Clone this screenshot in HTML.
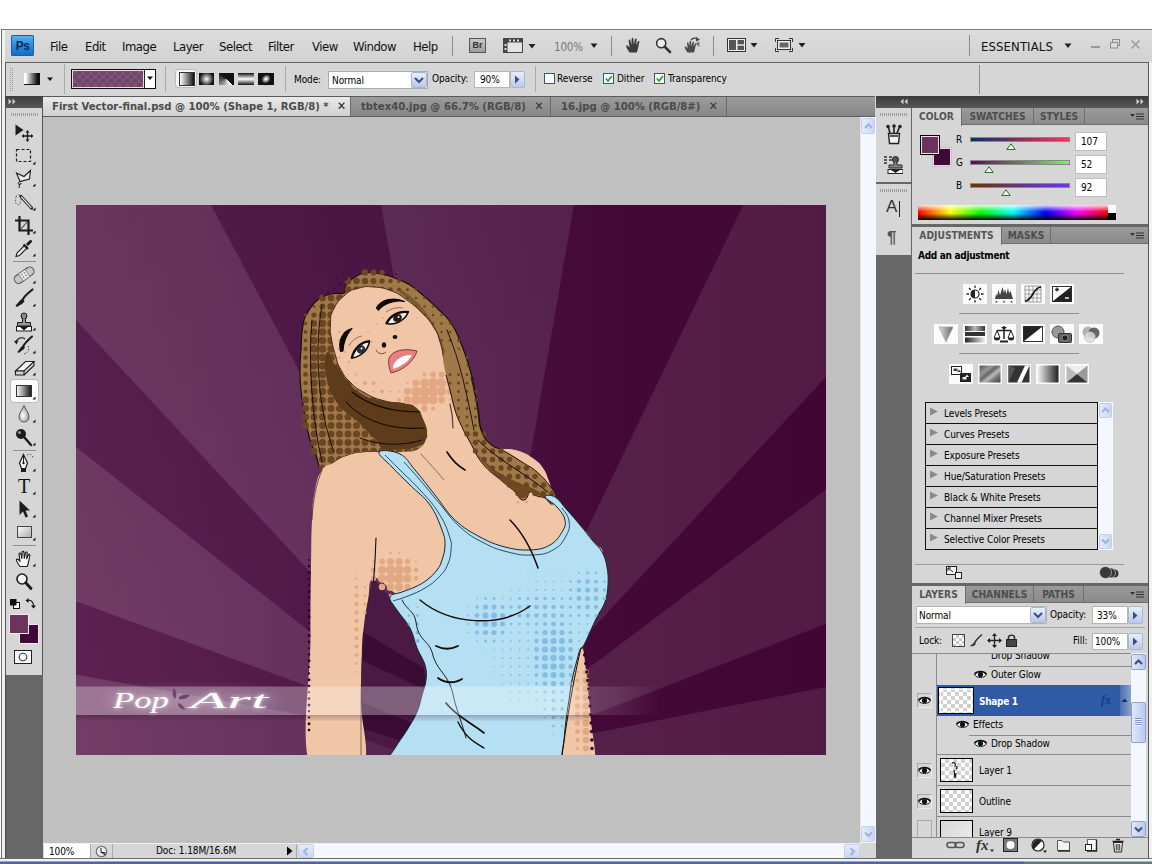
<!DOCTYPE html>
<html lang="en">
<head>
<meta charset="utf-8">
<title>Adobe Photoshop CS4 - First Vector-final.psd</title>
<style>
html,body{margin:0;padding:0;}
body{width:1152px;height:864px;overflow:hidden;background:#fff;position:relative;
 font-family:"DejaVu Sans Condensed","Liberation Sans",sans-serif;font-size:11px;color:#000;}
.abs{position:absolute;}
#win{position:absolute;left:0;top:29px;width:1152px;height:835px;background:#d6d6d6;}
/* window edges */
#edgeL{left:0;top:29px;width:5px;height:832px;background:linear-gradient(90deg,#fff 0 1px,#6e6e6e 1px 2px,#f0f0f0 2px 5px);}
#edgeR{left:1148px;top:62px;width:4px;height:799px;background:linear-gradient(90deg,#555 0 1px,#f1f1f1 1px 4px);}
#edgeT{left:1px;top:29px;width:1151px;height:1px;background:#7d7d7d;}
#edgeB{left:0;top:858px;width:1152px;height:6px;background:linear-gradient(180deg,#6d6d6d 0 1px,#f2f2f2 1px 3px,#9aa3b5 3px 4px,#4a66a8 4px 6px);}
/* menubar */
#menubar{left:2px;top:30px;width:1150px;height:32px;background:linear-gradient(180deg,#dcdcdc,#d2d2d2);}
.menu{position:absolute;top:39px;font-size:13px;line-height:16px;color:#111;letter-spacing:-0.5px;white-space:nowrap;}
.vsep{position:absolute;width:1px;background:#8c8c8c;}
/* options bar */
#optbar{left:5px;top:62px;width:1144px;height:34px;background:#d6d6d6;border-top:1px solid #5f5f5f;border-right:1px solid #5f5f5f;border-left:1px solid #5f5f5f;box-sizing:border-box;}
.lbl{position:absolute;font-size:10px;line-height:13px;white-space:nowrap;color:#000;letter-spacing:-0.1px;}
.field{position:absolute;background:#fff;border:1px solid #9a9a9a;box-sizing:border-box;}
.xpbtn{position:absolute;box-sizing:border-box;border:1px solid #a9b6cf;border-radius:2px;background:linear-gradient(180deg,#e8eefb,#b9c8ea);}
.chk{position:absolute;width:11px;height:11px;background:#fff;border:1px solid #2b5a8c;box-sizing:border-box;}
/* doc tabs */
#tabbar{left:43px;top:96px;width:832px;height:21px;background:linear-gradient(180deg,#9c9c9c,#868686);border-top:1px solid #5a5a5a;border-bottom:1px solid #5f5f5f;box-sizing:border-box;}
.dtab{position:absolute;top:97px;height:19px;box-sizing:border-box;font-weight:bold;font-size:11.2px;line-height:18px;color:#4a4a4a;white-space:nowrap;border-right:1px solid #6a6a6a;}
.dtab.act{background:linear-gradient(180deg,#e9e9e9,#d0d0d0);color:#4c4c4c;}
/* canvas */
#canvasbg{left:43px;top:117px;width:817px;height:726px;background:#c0c0c0;}
#vscroll{left:860px;top:117px;width:16px;height:726px;background:#f4f7fd;border-left:1px solid #e6e6e6;box-sizing:border-box;}
#status{left:43px;top:843px;width:833px;height:15px;background:#d6d6d6;border-top:1px solid #efefef;box-sizing:border-box;}
/* tool dock */
#tooldock{left:5px;top:96px;width:38px;height:762px;background:#676767;border-left:1px solid #4a4a4a;box-sizing:border-box;}
#toolhead{left:5px;top:96px;width:38px;height:12px;background:linear-gradient(180deg,#3f3f3f,#585858);}
#toolbar{left:5px;top:108px;width:38px;height:567px;background:#d6d6d6;border-left:1px solid #555;border-right:1px solid #555;box-sizing:border-box;}
/* right dock */
#rdock{left:876px;top:96px;width:272px;height:762px;background:#676767;}
#rhead{left:876px;top:96px;width:272px;height:12px;background:linear-gradient(180deg,#3a3a3a,#585858);}
.panel{position:absolute;background:#d6d6d6;}
.ptabs{position:absolute;height:17px;background:linear-gradient(180deg,#9a9a9a,#8a8a8a);border-bottom:1px solid #6e6e6e;box-sizing:border-box;}
.ptab{position:absolute;top:0;height:17px;box-sizing:border-box;font-weight:bold;font-size:10.2px;line-height:17px;color:#4d4d4d;text-align:center;border-right:1px solid #6e6e6e;letter-spacing:0;}
.ptab.act{background:#d6d6d6;color:#555;height:18px;}
.row{position:absolute;left:0;white-space:nowrap;}
</style>
</head>
<body>
<div id="win"></div>
<div id="menubar" class="abs"></div>
<!-- Ps logo -->
<div class="abs" style="left:11px;top:35px;width:23px;height:21px;border-radius:2px;background:linear-gradient(180deg,#5db4ee 0%,#2f8fdf 45%,#1169c4 100%);box-shadow:0 0 0 1px #1a5fa8 inset;"></div>
<div class="abs" style="left:11px;top:38px;width:23px;height:17px;text-align:center;font:bold 12px/17px 'Liberation Sans',sans-serif;color:#0a2a5e;letter-spacing:-0.5px;">Ps</div>
<div class="menu" style="left:50px">File</div>
<div class="menu" style="left:85px">Edit</div>
<div class="menu" style="left:122px">Image</div>
<div class="menu" style="left:173px">Layer</div>
<div class="menu" style="left:219px">Select</div>
<div class="menu" style="left:268px">Filter</div>
<div class="menu" style="left:312px">View</div>
<div class="menu" style="left:353px">Window</div>
<div class="menu" style="left:413px">Help</div>
<div class="vsep" style="left:452px;top:36px;height:20px"></div>
<!-- Br -->
<div class="abs" style="left:469px;top:38px;width:17px;height:15px;box-sizing:border-box;border:1px solid #555;background:linear-gradient(180deg,#c9c9c9,#9d9d9d);font:bold 9px/13px 'Liberation Sans',sans-serif;color:#333;text-align:center;">Br</div>
<!-- film icon -->
<svg class="abs" style="left:503px;top:37px" width="36" height="17" viewBox="0 0 36 17">
 <rect x="0.5" y="1.5" width="19" height="14" fill="#e4e4e4" stroke="#444"/>
 <rect x="0.5" y="1.5" width="19" height="4" fill="#444"/>
 <rect x="0.5" y="1.5" width="4" height="14" fill="#444"/>
 <g fill="#ddd"><rect x="6" y="2.5" width="2" height="2"/><rect x="10" y="2.5" width="2" height="2"/><rect x="14" y="2.5" width="2" height="2"/><rect x="1.5" y="7" width="2" height="2"/><rect x="1.5" y="11" width="2" height="2"/></g>
 <path d="M25.5 7 h7 l-3.5 4.5z" fill="#222"/>
</svg>
<div class="menu" style="left:554px;color:#777;font-size:11.5px;top:39px;letter-spacing:-0.2px">100%</div>
<svg class="abs" style="left:590px;top:43px" width="9" height="6"><path d="M0.5 0.5 h7 l-3.5 4.5z" fill="#222"/></svg>
<div class="vsep" style="left:611px;top:36px;height:20px"></div>
<!-- hand -->
<svg class="abs" style="left:625px;top:37px" width="18" height="17" viewBox="0 0 18 17">
 <path d="M4.5 15.5 C2 12 0.8 9.5 1.2 8.6 C2 7.6 3.4 9 4.6 10.6 L3.6 3.4 C3.5 2.2 5 2.1 5.3 3.2 L6.4 8 L6.6 1.8 C6.7 0.5 8.3 0.5 8.4 1.8 L8.8 7.8 L10 2.3 C10.3 1.1 11.8 1.4 11.7 2.6 L11.1 8.3 L12.9 4.4 C13.5 3.4 14.8 4 14.4 5.1 C13.4 8.5 13.3 12 11.8 15.5 Z" fill="#3c3c3c"/>
</svg>
<!-- zoom -->
<svg class="abs" style="left:655px;top:37px" width="17" height="17" viewBox="0 0 17 17">
 <circle cx="6.2" cy="6.2" r="4.6" fill="#eee" stroke="#333" stroke-width="1.6"/>
 <path d="M9.6 9.6 L15 15" stroke="#333" stroke-width="2.6" stroke-linecap="round"/>
</svg>
<!-- rotate view -->
<svg class="abs" style="left:683px;top:36px" width="19" height="18" viewBox="0 0 19 18">
 <path d="M4.5 16.5 C2.5 13.5 1.3 11.5 1.7 10.8 C2.4 10 3.6 11.2 4.6 12.4 L4 7 C3.9 6 5.2 5.9 5.4 6.8 L6.3 10.4 L6.6 5.6 C6.7 4.6 8 4.6 8.1 5.6 L8.4 10.2 L9.5 6.2 C9.8 5.2 11 5.5 10.9 6.4 L10.4 10.7 L11.8 7.8 C12.3 7 13.3 7.5 13 8.3 C12.2 11 12.1 13.8 10.9 16.5 Z" fill="#4a4a4a"/>
 <path d="M8 4 C10 1.6 13.2 1.6 15 3.4" fill="none" stroke="#444" stroke-width="1.3"/>
 <path d="M13.2 1 L17 3.8 L13 5.6z" fill="#444"/>
 <path d="M12.5 7.5 L16.5 5.5 L16.2 11z" fill="#777"/>
</svg>
<div class="vsep" style="left:713px;top:36px;height:20px"></div>
<!-- arrange -->
<svg class="abs" style="left:727px;top:38px" width="32" height="15" viewBox="0 0 32 15">
 <rect x="0.5" y="0.5" width="18" height="13" fill="#f0f0f0" stroke="#333"/>
 <rect x="2" y="2" width="7" height="10" fill="#555"/>
 <rect x="10.5" y="2" width="6.5" height="4.3" fill="#555"/>
 <rect x="10.5" y="7.7" width="6.5" height="4.3" fill="#555"/>
 <path d="M23.5 5 h7 l-3.5 4.5z" fill="#222"/>
</svg>
<!-- screen mode -->
<svg class="abs" style="left:775px;top:38px" width="32" height="15" viewBox="0 0 32 15">
 <path d="M0.5 4 V0.5 H4 M14 0.5 H17.5 V4 M17.5 10 V13.5 H14 M4 13.5 H0.5 V10" fill="none" stroke="#333"/>
 <rect x="2.5" y="2.5" width="13" height="9" fill="#eee" stroke="#333"/>
 <rect x="4.5" y="4.5" width="9" height="5" fill="#666"/>
 <path d="M23.5 5 h7 l-3.5 4.5z" fill="#222"/>
</svg>
<div class="vsep" style="left:969px;top:35px;height:21px"></div>
<div class="menu" style="left:981px;top:39px;font-size:13px;letter-spacing:0.1px">ESSENTIALS</div>
<svg class="abs" style="left:1064px;top:43px" width="9" height="6"><path d="M0.5 0.5 h7 l-3.5 4.5z" fill="#222"/></svg>
<!-- window buttons -->
<div class="abs" style="left:1091px;top:46px;width:9px;height:2px;background:#9a9a9a"></div>
<svg class="abs" style="left:1110px;top:39px" width="11" height="10"><rect x="2.5" y="0.5" width="7" height="6" fill="none" stroke="#8a8a8a"/><rect x="0.5" y="3.5" width="7" height="5.5" fill="#dcdcdc" stroke="#8a8a8a"/></svg>
<svg class="abs" style="left:1131px;top:40px" width="9" height="9"><path d="M0.5 0.5 L8.5 8.5 M8.5 0.5 L0.5 8.5" stroke="#9a9a9a" stroke-width="1.4"/></svg>

<!-- options bar -->
<div id="optbar" class="abs"></div>
<div class="abs" style="left:10px;top:68px;width:1px;height:23px;background:repeating-linear-gradient(180deg,#9a9a9a 0 1px,transparent 1px 2px);"></div><div class="abs" style="left:12px;top:68px;width:1px;height:23px;background:repeating-linear-gradient(180deg,#9a9a9a 0 1px,transparent 1px 2px);"></div>
<!-- gradient tool preset -->
<div class="abs" style="left:24px;top:73px;width:16px;height:12px;box-sizing:border-box;border-bottom:1px solid #111;border-right:1px solid #111;background:linear-gradient(90deg,#fff 10%,#111 90%);"></div>
<svg class="abs" style="left:47px;top:77px" width="7" height="5"><path d="M0 0.5 h6 l-3 3.5z" fill="#111"/></svg>
<div class="vsep" style="left:64px;top:64px;height:30px;background:#a9a9a9"></div>
<!-- gradient swatch -->
<div class="abs" style="left:71px;top:69px;width:85px;height:20px;box-sizing:border-box;border:1px solid #111;background:#fff;"></div>
<div class="abs" style="left:72px;top:70px;width:72px;height:18px;box-sizing:border-box;border:1px solid #ecdce8;background-color:#7d5274;background-image:linear-gradient(45deg,#704569 25%,transparent 25%,transparent 75%,#704569 75%),linear-gradient(45deg,#704569 25%,transparent 25%,transparent 75%,#704569 75%);background-size:8px 8px;background-position:0 0,4px 4px;"></div>
<div class="abs" style="left:144px;top:70px;width:1px;height:18px;background:#222"></div>
<svg class="abs" style="left:147px;top:76px" width="7" height="5"><path d="M0 0.5 h6 l-3 3.5z" fill="#111"/></svg>
<div class="vsep" style="left:165px;top:66px;height:26px;background:#a9a9a9"></div>
<!-- gradient type buttons -->
<div class="abs" style="left:176px;top:70px;width:20px;height:17px;border-radius:3px;background:#f6f6f6;box-shadow:0 0 0 1px #bdbdbd;"></div>
<div class="abs" style="left:180px;top:73px;width:14px;height:12px;background:linear-gradient(90deg,#fff,#111);box-shadow:0 0 0 1px #333;"></div>
<div class="abs" style="left:199px;top:73px;width:15px;height:12px;background:radial-gradient(circle,#fff 0%,#111 75%);"></div>
<div class="abs" style="left:219px;top:73px;width:15px;height:12px;background:conic-gradient(from 135deg,#fff,#111 50%,#111);"></div>
<div class="abs" style="left:238px;top:73px;width:16px;height:12px;background:linear-gradient(180deg,#111,#fff 50%,#111);"></div>
<div class="abs" style="left:258px;top:73px;width:16px;height:12px;background:#111;"></div>
<div class="abs" style="left:261px;top:73px;width:10px;height:12px;background:radial-gradient(closest-side,#fff 10%,#111 100%);transform:rotate(45deg) scale(.85);"></div>
<div class="vsep" style="left:285px;top:66px;height:26px;background:#a9a9a9"></div>
<div class="lbl" style="left:294px;top:73px">Mode:</div>
<div class="field" style="left:328px;top:71px;width:100px;height:18px;border-color:#a5acb2"></div>
<div class="lbl" style="left:332px;top:74px">Normal</div>
<div class="xpbtn" style="left:411px;top:72px;width:16px;height:16px"></div>
<svg class="abs" style="left:414px;top:77px" width="10" height="7"><path d="M1 1 L5 5 L9 1" fill="none" stroke="#3b4f7a" stroke-width="2"/></svg>
<div class="lbl" style="left:432px;top:72px">Opacity:</div>
<div class="field" style="left:474px;top:71px;width:36px;height:17px;border-color:#b5b5b5"></div>
<div class="lbl" style="left:480px;top:73px">90%</div>
<div class="xpbtn" style="left:510px;top:71px;width:15px;height:17px"></div>
<svg class="abs" style="left:514px;top:75px" width="7" height="9"><path d="M1 0.5 L5.5 4.5 L1 8.5z" fill="#3b4f7a"/></svg>
<div class="vsep" style="left:535px;top:66px;height:26px;background:#a9a9a9"></div>
<div class="chk" style="left:544px;top:73px;"></div>
<div class="lbl" style="left:557px;top:72px">Reverse</div>
<div class="chk" style="left:603px;top:73px;"></div>
<svg class="abs" style="left:605px;top:75px" width="8" height="8"><path d="M0.8 3.5 L3 6 L7 1" fill="none" stroke="#21a121" stroke-width="1.7"/></svg>
<div class="lbl" style="left:617px;top:72px">Dither</div>
<div class="chk" style="left:654px;top:73px;"></div>
<svg class="abs" style="left:656px;top:75px" width="8" height="8"><path d="M0.8 3.5 L3 6 L7 1" fill="none" stroke="#21a121" stroke-width="1.7"/></svg>
<div class="lbl" style="left:668px;top:72px">Transparency</div>
<div class="vsep" style="left:979px;top:65px;height:29px;background:#8c8c8c"></div>

<!-- document tab bar -->
<div id="tabbar" class="abs"></div>
<div class="dtab act" style="left:43px;width:308px;padding-left:9px;">First Vector-final.psd @ 100% (Shape 1, RGB/8) * <span style="font-weight:normal;font-size:12px;padding-left:5px;color:#222">✕</span></div>
<div class="dtab" style="left:351px;width:200px;padding-left:10px;">tbtex40.jpg @ 66.7% (RGB/8) <span style="font-weight:normal;font-size:12px;padding-left:5px;color:#333">✕</span></div>
<div class="dtab" style="left:551px;width:176px;padding-left:10px;">16.jpg @ 100% (RGB/8#) <span style="font-weight:normal;font-size:12px;padding-left:5px;color:#333">✕</span></div>

<!-- canvas bg, scrollbars, status -->
<div id="canvasbg" class="abs"></div>
<div id="vscroll" class="abs"></div>
<div class="xpbtn" style="left:861px;top:118px;width:14px;height:16px;border-color:#c4d0ea;background:linear-gradient(90deg,#e6edfb,#c9d6f3)"></div>
<svg class="abs" style="left:864px;top:123px" width="9" height="7"><path d="M1 5 L4.5 1.5 L8 5" fill="none" stroke="#9fb2dc" stroke-width="2"/></svg>
<div class="xpbtn" style="left:861px;top:826px;width:14px;height:16px;border-color:#c4d0ea;background:linear-gradient(90deg,#e6edfb,#c9d6f3)"></div>
<svg class="abs" style="left:864px;top:831px" width="9" height="7"><path d="M1 1.5 L4.5 5 L8 1.5" fill="none" stroke="#9fb2dc" stroke-width="2"/></svg>
<div id="status" class="abs"></div>
<div class="abs" style="left:44px;top:844px;width:46px;height:14px;background:#fff"></div>
<div class="lbl" style="left:49px;top:845px;font-size:10px">100%</div>
<div class="vsep" style="left:90px;top:844px;height:14px;background:#aaa"></div>
<svg class="abs" style="left:95px;top:845px" width="13" height="13"><circle cx="6.5" cy="6.5" r="5.2" fill="#eee" stroke="#777" stroke-width="1.3"/><path d="M6 3 V7.5 H10 L10 10 L6 7" fill="#fff" stroke="#222" stroke-width="1"/></svg>
<div class="vsep" style="left:112px;top:844px;height:14px;background:#aaa"></div>
<div class="lbl" style="left:156px;top:844px;font-size:10px">Doc: 1.18M/16.6M</div>
<svg class="abs" style="left:286px;top:846px" width="8" height="10"><path d="M1 0.5 L6.5 5 L1 9.5z" fill="#000"/></svg>
<div class="vsep" style="left:296px;top:844px;height:14px;background:#aaa"></div>
<!-- h scrollbar -->
<div class="abs" style="left:298px;top:844px;width:562px;height:14px;background:#f4f7fd"></div>
<div class="xpbtn" style="left:298px;top:844px;width:16px;height:14px;border-color:#c4d0ea;background:linear-gradient(180deg,#e6edfb,#c9d6f3)"></div>
<svg class="abs" style="left:302px;top:847px" width="7" height="9"><path d="M5.5 1 L2 4.5 L5.5 8" fill="none" stroke="#9fb2dc" stroke-width="2"/></svg>
<div class="xpbtn" style="left:844px;top:844px;width:16px;height:14px;border-color:#c4d0ea;background:linear-gradient(180deg,#e6edfb,#c9d6f3)"></div>
<svg class="abs" style="left:849px;top:847px" width="7" height="9"><path d="M1.5 1 L5 4.5 L1.5 8" fill="none" stroke="#9fb2dc" stroke-width="2"/></svg>
<div class="abs" style="left:860px;top:843px;width:16px;height:15px;background:#d6d6d6"></div>
<div id="tooldock" class="abs"></div>
<div id="toolhead" class="abs"></div>
<div id="toolbar" class="abs"></div>
<div class="abs" style="left:11px;top:113px;width:27px;height:3px;background:repeating-linear-gradient(90deg,#9c9c9c 0 1px,transparent 1px 2px);"></div>
<svg class="abs" style="left:8px;top:98px" width="8" height="8"><path d="M0.5 0.5 L3.5 3.5 L0.5 6.5z M4.5 0.5 L7.5 3.5 L4.5 6.5z" fill="#d0d0d0"/></svg>
<svg class="abs" style="left:6px;top:120px" width="36" height="24" viewBox="0 0 36 24"><path d="M9.5 4.5 L9.5 15.5 L17.5 10z" fill="#1c1c1c"/><g stroke="#1c1c1c" stroke-width="1.3"><path d="M21.5 11.5 V20.5 M17 16 H26"/></g><path d="M21.5 10 L19.5 12.5 H23.500Z M21.5 22 L19.5 19.5 H23.500Z M15.5 16 L18 14 V18Z M27.5 16 L25 14 V18Z" fill="#1c1c1c"/></svg>
<svg class="abs" style="left:6px;top:144px" width="36" height="24" viewBox="0 0 36 24"><rect x="10.5" y="5.5" width="14" height="12" fill="none" stroke="#1c1c1c" stroke-width="1.2" stroke-dasharray="3 2"/><path d="M29.5 20.5 L29.5 17.5 L26.5 20.500z" fill="#111"/></svg>
<svg class="abs" style="left:6px;top:166px" width="36" height="24" viewBox="0 0 36 24"><path d="M10.5 7 L18 10.5 L24.5 4.5 L23.5 13 L14 15.5 Z" fill="#e8e8e8" stroke="#1c1c1c" stroke-width="1.1"/><path d="M14 15.5 C11.5 16 11.5 19 14 18.5 C16 18 14.5 15 13.5 19.5 L13 22" fill="none" stroke="#1c1c1c" stroke-width="1"/><path d="M29.5 20.5 L29.5 17.5 L26.5 20.500z" fill="#111"/></svg>
<svg class="abs" style="left:6px;top:190px" width="36" height="24" viewBox="0 0 36 24"><path d="M10 6.5 C12 4 15 4.5 15.5 7 L14 14 C12 15.5 9.5 14 9.5 12Z" fill="none" stroke="#555" stroke-width="1" stroke-dasharray="1.5 1.5"/><path d="M15 6.5 L25.5 18" stroke="#1c1c1c" stroke-width="3.2" stroke-linecap="round"/><path d="M15.5 7 L25 17.5" stroke="#e0e0e0" stroke-width="1.2" stroke-linecap="round"/><path d="M29.5 20.5 L29.5 17.5 L26.5 20.500z" fill="#111"/></svg>
<svg class="abs" style="left:6px;top:213px" width="36" height="24" viewBox="0 0 36 24"><path d="M13.5 3 V17.5 H27 M9 7.5 H22.5 V22" fill="none" stroke="#1c1c1c" stroke-width="2.2"/><path d="M13.5 17.5 L22.5 7.5" stroke="#1c1c1c" stroke-width="1"/><path d="M29.5 20.5 L29.5 17.5 L26.5 20.500z" fill="#111"/></svg>
<svg class="abs" style="left:6px;top:236px" width="36" height="24" viewBox="0 0 36 24"><path d="M10 20.5 L11 17 L19 9 L21.5 11.5 L13.5 19.500Z" fill="#f2f2f2" stroke="#1c1c1c" stroke-width="1.1"/><path d="M17.5 8.5 L22 13" stroke="#1c1c1c" stroke-width="2.2"/><path d="M20 8 L23.5 4.5 C25 3 27 5 25.5 6.5 L22 10Z" fill="#1c1c1c"/><path d="M29.5 20.5 L29.5 17.5 L26.5 20.500z" fill="#111"/></svg>
<div class="abs" style="left:13px;top:261px;width:23px;height:1px;background:#8f8f8f"></div>
<svg class="abs" style="left:6px;top:263px" width="36" height="24" viewBox="0 0 36 24"><g transform="rotate(-35 18 12)"><rect x="7" y="8" width="22" height="8.5" rx="4" fill="#c8c8c8" stroke="#555" stroke-width="1.1"/><rect x="14" y="8" width="8" height="8.5" fill="#e8e8e8" stroke="#777" stroke-width=".700"/><g fill="#666"><circle cx="16.5" cy="10.5" r=".700"/><circle cx="19.5" cy="10.5" r=".700"/><circle cx="16.5" cy="13.5" r=".700"/><circle cx="19.5" cy="13.5" r=".700"/></g></g><path d="M29.5 20.5 L29.5 17.5 L26.5 20.500z" fill="#111"/></svg>
<svg class="abs" style="left:6px;top:286px" width="36" height="24" viewBox="0 0 36 24"><path d="M26.5 3.5 C22 7 18 11 16 14.5" stroke="#1c1c1c" stroke-width="2.2" fill="none" stroke-linecap="round"/><path d="M16.5 13 L18.5 15 C17.5 18 14 18.5 12 20.5 C9.5 21.5 9 20 10.5 18.5 C12.5 16.5 13.5 14 16.5 13Z" fill="#1c1c1c"/><path d="M29.5 20.5 L29.5 17.5 L26.5 20.500z" fill="#111"/></svg>
<svg class="abs" style="left:6px;top:310px" width="36" height="24" viewBox="0 0 36 24"><circle cx="18" cy="6" r="3" fill="#888" stroke="#1c1c1c"/><path d="M16.5 8.5 V12.5 H11.5 V16 H24.5 V12.5 H19.5 V8.5" fill="#999" stroke="#1c1c1c"/><rect x="10.5" y="16.5" width="15" height="4.5" fill="#fff" stroke="#1c1c1c"/><path d="M14 17 L18 20.5 L22 17z" fill="#1c1c1c"/><path d="M29.5 20.5 L29.5 17.5 L26.5 20.500z" fill="#111"/></svg>
<svg class="abs" style="left:6px;top:333px" width="36" height="24" viewBox="0 0 36 24"><path d="M26 3.5 C22 7 19 10 17 13.5" stroke="#1c1c1c" stroke-width="2" fill="none" stroke-linecap="round"/><path d="M17.5 12.5 L19 14.5 C18 17 15 17.5 13.5 19.5 C11.5 20.5 11 19 12.5 17.5 C14 16 14.5 13.5 17.5 12.500Z" fill="#1c1c1c"/><path d="M10 9 C11 5 16 3.5 19 6" fill="none" stroke="#1c1c1c" stroke-width="1.2"/><path d="M8 8 L10.5 11.5 L12.5 7.500z" fill="#1c1c1c"/><path d="M22 13 C24 16 22 20 18 21" fill="none" stroke="#444" stroke-width="1" stroke-dasharray="1.5 1.5"/><path d="M29.5 20.5 L29.5 17.5 L26.5 20.500z" fill="#111"/></svg>
<svg class="abs" style="left:6px;top:355px" width="36" height="24" viewBox="0 0 36 24"><path d="M9.5 16 L19.5 6.5 H28 L18 16Z" fill="#f6f6f6" stroke="#1c1c1c" stroke-width="1.1"/><path d="M9.5 16 H18 V20 H9.500Z" fill="#d0d0d0" stroke="#1c1c1c" stroke-width="1.1"/><path d="M18 20 L28 10.5 V6.5" fill="none" stroke="#1c1c1c" stroke-width="1.1"/><path d="M29.5 20.5 L29.5 17.5 L26.5 20.500z" fill="#111"/></svg>
<div class="abs" style="left:11px;top:380px;width:27px;height:22px;border-radius:3px;background:#fbfbfb;box-shadow:0 0 0 1px #bbb;"></div>
<svg class="abs" style="left:6px;top:379px" width="36" height="24" viewBox="0 0 36 24"><defs><linearGradient id="tg" x1="0" x2="1"><stop offset="0" stop-color="#fff"/><stop offset="1" stop-color="#111"/></linearGradient></defs><rect x="10.5" y="6.5" width="15" height="11" fill="url(#tg)" stroke="#333"/><path d="M29.5 20.5 L29.5 17.5 L26.5 20.500z" fill="#111"/></svg>
<svg class="abs" style="left:6px;top:402px" width="36" height="24" viewBox="0 0 36 24"><defs><radialGradient id="bd" cx=".4" cy=".6" r=".6"><stop offset="0" stop-color="#fff"/><stop offset="1" stop-color="#999"/></radialGradient></defs><path d="M18 3.5 C20 8 23 11 23 15 C23 21.5 13 21.5 13 15 C13 11 16 8 18 3.500Z" fill="url(#bd)" stroke="#555" stroke-width="1"/><path d="M29.5 20.5 L29.5 17.5 L26.5 20.500z" fill="#111"/></svg>
<svg class="abs" style="left:6px;top:425px" width="36" height="24" viewBox="0 0 36 24"><circle cx="15" cy="9" r="5" fill="#1c1c1c"/><circle cx="13.5" cy="7.5" r="1.5" fill="#999"/><path d="M18.5 12.5 L25 20" stroke="#1c1c1c" stroke-width="2.4" stroke-linecap="round"/><path d="M29.5 20.5 L29.5 17.5 L26.5 20.500z" fill="#111"/></svg>
<div class="abs" style="left:13px;top:450px;width:23px;height:1px;background:#8f8f8f"></div>
<svg class="abs" style="left:6px;top:451px" width="36" height="24" viewBox="0 0 36 24"><path d="M17.5 3.5 L21.5 12 L19.5 17.5 H15.5 L13.5 12Z" fill="#f4f4f4" stroke="#1c1c1c" stroke-width="1.2"/><path d="M17.5 5 V11" stroke="#1c1c1c" stroke-width="1"/><circle cx="17.5" cy="12" r="1.2" fill="#1c1c1c"/><path d="M15 18 H20 V21 H15Z" fill="#1c1c1c"/><path d="M21 4 C24 2 26 4 27 6.5" fill="none" stroke="#555" stroke-width="1" stroke-dasharray="1.5 1.5"/><path d="M29.5 20.5 L29.5 17.5 L26.5 20.500z" fill="#111"/></svg>
<div class="abs" style="left:6px;top:474px;width:36px;height:24px;text-align:center;font:20px/24px 'Liberation Serif',serif;color:#111;">T</div>
<svg class="abs" style="left:6px;top:474px" width="36" height="24" viewBox="0 0 36 24"><path d="M29.5 20.5 L29.5 17.5 L26.5 20.500z" fill="#111"/></svg>
<svg class="abs" style="left:6px;top:497px" width="36" height="24" viewBox="0 0 36 24"><path d="M13.5 3.5 L13.5 18 L17 14.5 L19.5 20.5 L22 19.5 L19.5 13.5 L24 13.500Z" fill="#1c1c1c"/><path d="M29.5 20.5 L29.5 17.5 L26.5 20.500z" fill="#111"/></svg>
<svg class="abs" style="left:6px;top:520px" width="36" height="24" viewBox="0 0 36 24"><defs><linearGradient id="rg" x1="0" y1="0" x2="1" y2="1"><stop offset="0" stop-color="#fff"/><stop offset="1" stop-color="#aaa"/></linearGradient></defs><rect x="11.5" y="6.5" width="14" height="11" fill="url(#rg)" stroke="#444"/><path d="M29.5 20.5 L29.5 17.5 L26.5 20.500z" fill="#111"/></svg>
<div class="abs" style="left:13px;top:545px;width:23px;height:1px;background:#8f8f8f"></div>
<svg class="abs" style="left:6px;top:546px" width="36" height="24" viewBox="0 0 36 24"><path d="M14 20.5 C11.5 17 10 14.5 10.5 13.5 C11.5 12.5 13 14 14 15.5 L13 8 C12.9 6.8 14.5 6.7 14.8 7.8 L15.9 12.5 L16.1 6.3 C16.2 5 17.8 5 17.9 6.3 L18.3 12.3 L19.5 6.8 C19.8 5.6 21.3 5.9 21.2 7.1 L20.6 12.8 L22.4 8.9 C23 7.9 24.3 8.5 23.9 9.6 C22.9 13 22.8 16.5 21.3 20.5 Z" fill="#fafafa" stroke="#1c1c1c" stroke-width="1.1" stroke-linejoin="round"/><path d="M29.5 20.5 L29.5 17.5 L26.5 20.500z" fill="#111"/></svg>
<svg class="abs" style="left:6px;top:569px" width="36" height="24" viewBox="0 0 36 24"><circle cx="16" cy="10" r="5" fill="#f4f4f4" stroke="#1c1c1c" stroke-width="1.6"/><path d="M19.8 13.8 L25 19.5" stroke="#1c1c1c" stroke-width="2.8" stroke-linecap="round"/></svg>
<svg class="abs" style="left:9px;top:597px" width="30" height="14" viewBox="0 0 30 14"><rect x="4.5" y="5.5" width="6" height="6" fill="#fff" stroke="#111"/><rect x="1" y="2" width="6.5" height="6.5" fill="#111"/><path d="M18.5 3.5 C22 2.5 24.5 5 24.5 9" fill="none" stroke="#111" stroke-width="1.2"/><path d="M16.5 3.5 L19.5 1 V6Z M24.5 11.5 L22 8.5 H27Z" fill="#111"/></svg>
<div class="abs" style="left:19px;top:624px;width:20px;height:20px;box-sizing:border-box;background:#3f0a36;border:1px solid #f6e8f0;"></div>
<div class="abs" style="left:9px;top:614px;width:20px;height:20px;box-sizing:border-box;background:#6b345c;border:1px solid #f6e8f0;"></div>
<svg class="abs" style="left:14px;top:650px" width="19" height="15"><rect x="0.5" y="0.5" width="17" height="13" fill="#fafafa" stroke="#222"/><circle cx="9" cy="7" r="3.8" fill="none" stroke="#333" stroke-width="1.1"/></svg>
<svg class="abs" style="left:76px;top:205px" width="750" height="550" viewBox="76 205 750 550">
<defs>
<linearGradient id="bgx" x1="76" x2="826" y1="0" y2="0" gradientUnits="userSpaceOnUse"><stop offset="0" stop-color="#5d2252"/><stop offset="0.42" stop-color="#4d1546"/><stop offset="0.7" stop-color="#440938"/><stop offset="1" stop-color="#420635"/></linearGradient>
<linearGradient id="bgy" x1="76" x2="330" y1="205" y2="520" gradientUnits="userSpaceOnUse"><stop offset="0" stop-color="#1a0018" stop-opacity="0.13"/><stop offset="1" stop-color="#1a0018" stop-opacity="0"/></linearGradient>
<linearGradient id="ban" x1="76" x2="660" y1="0" y2="0" gradientUnits="userSpaceOnUse"><stop offset="0" stop-color="#fff" stop-opacity="0.30"/><stop offset="0.83" stop-color="#fff" stop-opacity="0.30"/><stop offset="0.87" stop-color="#fff" stop-opacity="0.15"/><stop offset="0.93" stop-color="#fff" stop-opacity="0.09"/><stop offset="1" stop-color="#fff" stop-opacity="0"/></linearGradient>
<linearGradient id="bansh" x1="0" x2="0" y1="715" y2="722" gradientUnits="userSpaceOnUse"><stop offset="0" stop-color="#1b0018" stop-opacity="0.25"/><stop offset="1" stop-color="#1b0018" stop-opacity="0"/></linearGradient>
<filter id="glow" x="-20%" y="-60%" width="140%" height="220%"><feGaussianBlur stdDeviation="2.2"/></filter>
<filter id="glow2" x="-20%" y="-100%" width="140%" height="300%"><feGaussianBlur stdDeviation="6"/></filter>
<clipPath id="cv"><rect x="76" y="205" width="750" height="550"/></clipPath>
</defs>
<g clip-path="url(#cv)">
<rect x="76" y="205" width="750" height="550" fill="url(#bgx)"/>
<linearGradient id="rayg" x1="76" x2="826" y1="0" y2="0" gradientUnits="userSpaceOnUse"><stop offset="0" stop-color="#ffe0ee" stop-opacity="0.14"/><stop offset="0.45" stop-color="#fff" stop-opacity="0.10"/><stop offset="1" stop-color="#fff" stop-opacity="0.085"/></linearGradient>
<g fill="url(#rayg)">
<path d="M76.0 205.0 L211.0 205.0 L534.0 813.0 L76.0 320.0Z"/>
<path d="M381.0 205.0 L574.0 205.0 L479.0 750.0Z"/>
<path d="M743.3 205.0 L826.0 205.0 L826.0 376.7 L482.0 748.0Z"/>
<path d="M826.0 489.5 L826.0 623.8 L456.0 768.0Z"/>
<path d="M826.0 687.0 L826.0 756.0 L456.0 756.0 L456.0 760.6Z"/>
<path d="M76.0 447.0 L76.0 601.3 L440.0 734.5Z"/>
<path d="M76.0 674.7 L76.0 756.0 L440.0 756.0 L440.0 739.0Z"/>
</g>
<rect x="76" y="205" width="750" height="550" fill="url(#bgy)"/>
<path d="M373.0 578.0 L380.0 586.0 L390.0 597.0 L398.0 610.0 L410.0 628.0 L418.0 648.0 L425.0 665.0 L426.0 680.0 L422.0 695.0 L417.0 712.0 L407.0 730.0 L395.0 748.0 L390.0 756.0 L361.0 756.0 L361.0 700.0 L362.0 650.0 L364.0 625.0 L368.0 600.0Z" fill="#4a1a45"/>
<path d="M363 632 L424 668 L426 690 L361 660Z M361 702 L414 724 L402 741 L361 728Z" fill="#3a0b35"/>
<path d="M361 738 L398 752 L392 758 L361 758Z" fill="#592552"/>
<path d="M344.0 293.0 C347.7 291.1 342.9 290.7 345.0 287.0 C347.1 283.3 346.4 282.8 352.0 279.0 C357.6 275.2 357.7 273.8 366.0 272.6 C374.3 271.4 374.7 272.8 383.0 274.5 C391.3 276.2 389.8 276.2 397.0 279.0 C404.2 281.8 402.8 280.5 410.0 285.0 C417.2 289.5 416.5 289.6 424.0 296.0 C431.5 302.4 430.8 301.8 438.0 309.0 C445.2 316.2 445.1 314.5 451.0 323.0 C456.9 331.5 455.7 331.1 460.0 341.0 C464.3 350.9 463.8 350.4 467.0 360.0 C470.2 369.6 469.7 367.7 472.0 377.0 C474.3 386.3 473.8 385.7 475.5 395.0 C477.2 404.3 476.9 402.7 478.5 412.0 C480.1 421.3 478.4 421.5 481.5 430.0 C484.6 438.5 484.0 438.4 490.0 444.0 C496.0 449.6 495.5 446.2 504.0 451.0 C512.5 455.8 513.2 456.4 522.0 462.0 C530.8 467.6 529.5 465.6 537.0 472.0 C544.5 478.4 544.9 479.6 550.0 486.0 C555.1 492.4 554.8 491.7 556.0 496.0 C557.2 500.3 556.1 500.1 554.5 502.0 C552.9 503.9 552.5 504.1 550.0 503.0 C547.5 501.9 548.5 499.9 545.0 498.0 C541.5 496.1 541.0 497.6 537.0 496.0 C533.0 494.4 532.9 491.2 530.0 492.0 C527.1 492.8 528.5 497.1 526.0 499.0 C523.5 500.9 523.4 500.9 520.5 499.0 C517.6 497.1 519.9 496.8 515.0 492.0 C510.1 487.2 510.5 488.5 502.0 481.0 C493.5 473.5 491.5 474.4 483.0 464.0 C474.5 453.6 477.5 453.7 470.0 442.0 C462.5 430.3 463.0 423.2 455.0 420.0 C447.0 416.8 447.5 424.7 440.0 430.0 C432.5 435.3 431.8 435.2 427.0 440.0 C422.2 444.8 426.5 444.8 422.0 448.0 C417.5 451.2 417.2 450.7 410.0 452.0 C402.8 453.3 403.0 453.0 395.0 453.0 C387.0 453.0 388.8 452.1 380.0 452.0 C371.2 451.9 371.1 451.4 362.0 452.5 C352.9 453.6 353.7 453.2 346.0 456.0 C338.3 458.8 339.4 459.3 333.0 463.0 C326.6 466.7 326.5 472.1 322.0 470.0 C317.5 467.9 319.5 464.1 316.0 455.0 C312.5 445.9 312.2 448.0 309.0 436.0 C305.8 424.0 306.1 422.3 304.0 410.0 C301.9 397.7 302.1 400.7 301.0 390.0 C299.9 379.3 300.0 380.7 300.0 370.0 C300.0 359.3 300.2 362.0 301.0 350.0 C301.8 338.0 301.1 335.1 303.0 325.0 C304.9 314.9 304.0 318.8 308.0 312.0 C312.0 305.2 311.9 304.3 318.0 299.5 C324.1 294.7 324.1 295.7 331.0 294.0 C337.9 292.3 340.3 294.9 344.0 293.0Z" fill="#9f7a48" stroke="#1a0f08" stroke-width="1.2"/>
<path d="M400 289 C420 300 436 322 444 348 C450 370 452 392 458 414 L452 410 C446 390 444 368 438 346 C430 322 416 304 400 293Z" fill="#7d5a30"/>
<g fill="#6c4624">
<circle cx="365.0" cy="272.5" r="3.3"/>
<circle cx="373.5" cy="272.5" r="3.0"/>
<circle cx="382.0" cy="272.5" r="2.7"/>
<circle cx="348.0" cy="281.0" r="3.4"/>
<circle cx="356.5" cy="281.0" r="3.3"/>
<circle cx="365.0" cy="281.0" r="3.3"/>
<circle cx="373.5" cy="281.0" r="3.0"/>
<circle cx="382.0" cy="281.0" r="2.7"/>
<circle cx="390.5" cy="281.0" r="2.3"/>
<circle cx="399.0" cy="281.0" r="2.0"/>
<circle cx="348.0" cy="289.5" r="3.4"/>
<circle cx="356.5" cy="289.5" r="3.3"/>
<circle cx="365.0" cy="289.5" r="3.3"/>
<circle cx="373.5" cy="289.5" r="3.0"/>
<circle cx="382.0" cy="289.5" r="2.7"/>
<circle cx="390.5" cy="289.5" r="2.3"/>
<circle cx="399.0" cy="289.5" r="2.0"/>
<circle cx="407.5" cy="289.5" r="1.6"/>
<circle cx="416.0" cy="289.5" r="1.3"/>
<circle cx="322.5" cy="298.0" r="3.4"/>
<circle cx="331.0" cy="298.0" r="3.4"/>
<circle cx="339.5" cy="298.0" r="3.4"/>
<circle cx="348.0" cy="298.0" r="3.4"/>
<circle cx="356.5" cy="298.0" r="1.3"/>
<circle cx="365.0" cy="298.0" r="1.3"/>
<circle cx="373.5" cy="298.0" r="1.3"/>
<circle cx="382.0" cy="298.0" r="1.3"/>
<circle cx="390.5" cy="298.0" r="1.3"/>
<circle cx="399.0" cy="298.0" r="1.3"/>
<circle cx="407.5" cy="298.0" r="1.3"/>
<circle cx="416.0" cy="298.0" r="1.3"/>
<circle cx="424.5" cy="298.0" r="1.3"/>
<circle cx="314.0" cy="306.5" r="1.5"/>
<circle cx="322.5" cy="306.5" r="2.9"/>
<circle cx="331.0" cy="306.5" r="3.6"/>
<circle cx="339.5" cy="306.5" r="3.7"/>
<circle cx="348.0" cy="306.5" r="3.7"/>
<circle cx="356.5" cy="306.5" r="1.3"/>
<circle cx="365.0" cy="306.5" r="1.3"/>
<circle cx="373.5" cy="306.5" r="1.3"/>
<circle cx="382.0" cy="306.5" r="1.3"/>
<circle cx="390.5" cy="306.5" r="1.3"/>
<circle cx="399.0" cy="306.5" r="1.3"/>
<circle cx="407.5" cy="306.5" r="1.3"/>
<circle cx="416.0" cy="306.5" r="1.3"/>
<circle cx="424.5" cy="306.5" r="1.3"/>
<circle cx="433.0" cy="306.5" r="1.3"/>
<circle cx="305.5" cy="315.0" r="1.6"/>
<circle cx="314.0" cy="315.0" r="2.6"/>
<circle cx="322.5" cy="315.0" r="3.7"/>
<circle cx="331.0" cy="315.0" r="3.7"/>
<circle cx="339.5" cy="315.0" r="3.7"/>
<circle cx="348.0" cy="315.0" r="3.7"/>
<circle cx="356.5" cy="315.0" r="1.3"/>
<circle cx="365.0" cy="315.0" r="1.3"/>
<circle cx="373.5" cy="315.0" r="1.3"/>
<circle cx="382.0" cy="315.0" r="1.3"/>
<circle cx="390.5" cy="315.0" r="1.3"/>
<circle cx="399.0" cy="315.0" r="1.3"/>
<circle cx="407.5" cy="315.0" r="1.3"/>
<circle cx="416.0" cy="315.0" r="1.3"/>
<circle cx="424.5" cy="315.0" r="1.3"/>
<circle cx="433.0" cy="315.0" r="1.3"/>
<circle cx="441.5" cy="315.0" r="1.3"/>
<circle cx="305.5" cy="323.5" r="1.7"/>
<circle cx="314.0" cy="323.5" r="3.2"/>
<circle cx="322.5" cy="323.5" r="3.7"/>
<circle cx="331.0" cy="323.5" r="3.7"/>
<circle cx="339.5" cy="323.5" r="3.7"/>
<circle cx="348.0" cy="323.5" r="3.7"/>
<circle cx="356.5" cy="323.5" r="1.3"/>
<circle cx="365.0" cy="323.5" r="1.3"/>
<circle cx="373.5" cy="323.5" r="1.3"/>
<circle cx="382.0" cy="323.5" r="1.3"/>
<circle cx="390.5" cy="323.5" r="1.3"/>
<circle cx="399.0" cy="323.5" r="1.3"/>
<circle cx="407.5" cy="323.5" r="1.3"/>
<circle cx="416.0" cy="323.5" r="1.3"/>
<circle cx="424.5" cy="323.5" r="1.3"/>
<circle cx="433.0" cy="323.5" r="1.3"/>
<circle cx="441.5" cy="323.5" r="1.3"/>
<circle cx="450.0" cy="323.5" r="1.3"/>
<circle cx="305.5" cy="332.0" r="1.9"/>
<circle cx="314.0" cy="332.0" r="3.6"/>
<circle cx="322.5" cy="332.0" r="3.7"/>
<circle cx="331.0" cy="332.0" r="3.7"/>
<circle cx="339.5" cy="332.0" r="3.7"/>
<circle cx="348.0" cy="332.0" r="3.7"/>
<circle cx="356.5" cy="332.0" r="1.3"/>
<circle cx="365.0" cy="332.0" r="1.3"/>
<circle cx="373.5" cy="332.0" r="1.3"/>
<circle cx="382.0" cy="332.0" r="1.3"/>
<circle cx="390.5" cy="332.0" r="1.3"/>
<circle cx="399.0" cy="332.0" r="1.3"/>
<circle cx="407.5" cy="332.0" r="1.3"/>
<circle cx="416.0" cy="332.0" r="1.3"/>
<circle cx="424.5" cy="332.0" r="1.3"/>
<circle cx="433.0" cy="332.0" r="1.3"/>
<circle cx="441.5" cy="332.0" r="1.3"/>
<circle cx="450.0" cy="332.0" r="1.3"/>
<circle cx="305.5" cy="340.5" r="2.0"/>
<circle cx="314.0" cy="340.5" r="3.7"/>
<circle cx="322.5" cy="340.5" r="3.7"/>
<circle cx="331.0" cy="340.5" r="3.7"/>
<circle cx="339.5" cy="340.5" r="3.7"/>
<circle cx="348.0" cy="340.5" r="3.7"/>
<circle cx="356.5" cy="340.5" r="1.4"/>
<circle cx="365.0" cy="340.5" r="1.4"/>
<circle cx="373.5" cy="340.5" r="1.4"/>
<circle cx="382.0" cy="340.5" r="1.4"/>
<circle cx="390.5" cy="340.5" r="1.4"/>
<circle cx="399.0" cy="340.5" r="1.4"/>
<circle cx="407.5" cy="340.5" r="1.4"/>
<circle cx="416.0" cy="340.5" r="1.4"/>
<circle cx="424.5" cy="340.5" r="1.4"/>
<circle cx="433.0" cy="340.5" r="1.4"/>
<circle cx="441.5" cy="340.5" r="1.4"/>
<circle cx="450.0" cy="340.5" r="1.4"/>
<circle cx="458.5" cy="340.5" r="1.4"/>
<circle cx="305.5" cy="349.0" r="2.2"/>
<circle cx="314.0" cy="349.0" r="3.7"/>
<circle cx="322.5" cy="349.0" r="3.7"/>
<circle cx="331.0" cy="349.0" r="3.7"/>
<circle cx="339.5" cy="349.0" r="3.7"/>
<circle cx="348.0" cy="349.0" r="3.7"/>
<circle cx="356.5" cy="349.0" r="1.5"/>
<circle cx="365.0" cy="349.0" r="1.5"/>
<circle cx="373.5" cy="349.0" r="1.5"/>
<circle cx="382.0" cy="349.0" r="1.5"/>
<circle cx="390.5" cy="349.0" r="1.5"/>
<circle cx="399.0" cy="349.0" r="1.5"/>
<circle cx="407.5" cy="349.0" r="1.5"/>
<circle cx="416.0" cy="349.0" r="1.5"/>
<circle cx="424.5" cy="349.0" r="1.5"/>
<circle cx="433.0" cy="349.0" r="1.5"/>
<circle cx="441.5" cy="349.0" r="1.5"/>
<circle cx="450.0" cy="349.0" r="1.5"/>
<circle cx="458.5" cy="349.0" r="1.5"/>
<circle cx="305.5" cy="357.5" r="2.3"/>
<circle cx="314.0" cy="357.5" r="3.7"/>
<circle cx="322.5" cy="357.5" r="3.7"/>
<circle cx="331.0" cy="357.5" r="3.7"/>
<circle cx="339.5" cy="357.5" r="3.7"/>
<circle cx="348.0" cy="357.5" r="3.7"/>
<circle cx="356.5" cy="357.5" r="1.6"/>
<circle cx="365.0" cy="357.5" r="1.6"/>
<circle cx="373.5" cy="357.5" r="1.6"/>
<circle cx="382.0" cy="357.5" r="1.6"/>
<circle cx="390.5" cy="357.5" r="1.6"/>
<circle cx="399.0" cy="357.5" r="1.6"/>
<circle cx="407.5" cy="357.5" r="1.6"/>
<circle cx="416.0" cy="357.5" r="1.6"/>
<circle cx="424.5" cy="357.5" r="1.6"/>
<circle cx="433.0" cy="357.5" r="1.6"/>
<circle cx="441.5" cy="357.5" r="1.6"/>
<circle cx="450.0" cy="357.5" r="1.6"/>
<circle cx="458.5" cy="357.5" r="1.6"/>
<circle cx="467.0" cy="357.5" r="1.6"/>
<circle cx="305.5" cy="366.0" r="2.4"/>
<circle cx="314.0" cy="366.0" r="3.7"/>
<circle cx="322.5" cy="366.0" r="3.7"/>
<circle cx="331.0" cy="366.0" r="3.7"/>
<circle cx="339.5" cy="366.0" r="3.7"/>
<circle cx="348.0" cy="366.0" r="3.7"/>
<circle cx="356.5" cy="366.0" r="1.7"/>
<circle cx="365.0" cy="366.0" r="1.7"/>
<circle cx="373.5" cy="366.0" r="1.7"/>
<circle cx="382.0" cy="366.0" r="1.7"/>
<circle cx="390.5" cy="366.0" r="1.7"/>
<circle cx="399.0" cy="366.0" r="1.7"/>
<circle cx="407.5" cy="366.0" r="1.7"/>
<circle cx="416.0" cy="366.0" r="1.7"/>
<circle cx="424.5" cy="366.0" r="1.7"/>
<circle cx="433.0" cy="366.0" r="1.7"/>
<circle cx="441.5" cy="366.0" r="1.7"/>
<circle cx="450.0" cy="366.0" r="1.7"/>
<circle cx="458.5" cy="366.0" r="1.7"/>
<circle cx="467.0" cy="366.0" r="1.7"/>
<circle cx="305.5" cy="374.5" r="2.4"/>
<circle cx="314.0" cy="374.5" r="3.7"/>
<circle cx="322.5" cy="374.5" r="3.7"/>
<circle cx="331.0" cy="374.5" r="3.7"/>
<circle cx="339.5" cy="374.5" r="3.7"/>
<circle cx="348.0" cy="374.5" r="3.7"/>
<circle cx="356.5" cy="374.5" r="1.8"/>
<circle cx="365.0" cy="374.5" r="1.8"/>
<circle cx="373.5" cy="374.5" r="1.8"/>
<circle cx="382.0" cy="374.5" r="1.8"/>
<circle cx="390.5" cy="374.5" r="1.8"/>
<circle cx="399.0" cy="374.5" r="1.8"/>
<circle cx="407.5" cy="374.5" r="1.8"/>
<circle cx="416.0" cy="374.5" r="1.8"/>
<circle cx="424.5" cy="374.5" r="1.8"/>
<circle cx="433.0" cy="374.5" r="1.8"/>
<circle cx="441.5" cy="374.5" r="1.8"/>
<circle cx="450.0" cy="374.5" r="1.8"/>
<circle cx="458.5" cy="374.5" r="1.8"/>
<circle cx="467.0" cy="374.5" r="1.8"/>
<circle cx="305.5" cy="383.0" r="2.3"/>
<circle cx="314.0" cy="383.0" r="3.7"/>
<circle cx="322.5" cy="383.0" r="3.7"/>
<circle cx="331.0" cy="383.0" r="3.7"/>
<circle cx="339.5" cy="383.0" r="3.7"/>
<circle cx="348.0" cy="383.0" r="3.7"/>
<circle cx="356.5" cy="383.0" r="1.9"/>
<circle cx="365.0" cy="383.0" r="1.9"/>
<circle cx="373.5" cy="383.0" r="1.9"/>
<circle cx="382.0" cy="383.0" r="1.9"/>
<circle cx="390.5" cy="383.0" r="1.9"/>
<circle cx="399.0" cy="383.0" r="1.9"/>
<circle cx="407.5" cy="383.0" r="1.9"/>
<circle cx="416.0" cy="383.0" r="1.9"/>
<circle cx="424.5" cy="383.0" r="1.9"/>
<circle cx="433.0" cy="383.0" r="1.9"/>
<circle cx="441.5" cy="383.0" r="1.9"/>
<circle cx="450.0" cy="383.0" r="1.9"/>
<circle cx="458.5" cy="383.0" r="1.9"/>
<circle cx="467.0" cy="383.0" r="1.9"/>
<circle cx="305.5" cy="391.5" r="2.1"/>
<circle cx="314.0" cy="391.5" r="3.7"/>
<circle cx="322.5" cy="391.5" r="3.7"/>
<circle cx="331.0" cy="391.5" r="3.7"/>
<circle cx="339.5" cy="391.5" r="3.7"/>
<circle cx="348.0" cy="391.5" r="3.7"/>
<circle cx="356.5" cy="391.5" r="2.0"/>
<circle cx="365.0" cy="391.5" r="2.0"/>
<circle cx="373.5" cy="391.5" r="2.0"/>
<circle cx="382.0" cy="391.5" r="2.0"/>
<circle cx="390.5" cy="391.5" r="2.0"/>
<circle cx="399.0" cy="391.5" r="2.0"/>
<circle cx="407.5" cy="391.5" r="2.0"/>
<circle cx="416.0" cy="391.5" r="2.0"/>
<circle cx="424.5" cy="391.5" r="2.0"/>
<circle cx="433.0" cy="391.5" r="2.0"/>
<circle cx="441.5" cy="391.5" r="2.0"/>
<circle cx="450.0" cy="391.5" r="2.0"/>
<circle cx="458.5" cy="391.5" r="2.0"/>
<circle cx="467.0" cy="391.5" r="2.0"/>
<circle cx="475.5" cy="391.5" r="2.0"/>
<circle cx="305.5" cy="400.0" r="3.5"/>
<circle cx="314.0" cy="400.0" r="3.5"/>
<circle cx="322.5" cy="400.0" r="3.5"/>
<circle cx="331.0" cy="400.0" r="3.5"/>
<circle cx="339.5" cy="400.0" r="3.5"/>
<circle cx="348.0" cy="400.0" r="3.5"/>
<circle cx="356.5" cy="400.0" r="3.5"/>
<circle cx="365.0" cy="400.0" r="3.5"/>
<circle cx="373.5" cy="400.0" r="3.5"/>
<circle cx="382.0" cy="400.0" r="3.5"/>
<circle cx="390.5" cy="400.0" r="3.5"/>
<circle cx="399.0" cy="400.0" r="3.5"/>
<circle cx="407.5" cy="400.0" r="3.5"/>
<circle cx="416.0" cy="400.0" r="3.5"/>
<circle cx="424.5" cy="400.0" r="3.5"/>
<circle cx="433.0" cy="400.0" r="3.5"/>
<circle cx="441.5" cy="400.0" r="2.1"/>
<circle cx="450.0" cy="400.0" r="2.1"/>
<circle cx="458.5" cy="400.0" r="2.1"/>
<circle cx="467.0" cy="400.0" r="2.1"/>
<circle cx="475.5" cy="400.0" r="2.1"/>
<circle cx="305.5" cy="408.5" r="3.5"/>
<circle cx="314.0" cy="408.5" r="3.5"/>
<circle cx="322.5" cy="408.5" r="3.5"/>
<circle cx="331.0" cy="408.5" r="3.5"/>
<circle cx="339.5" cy="408.5" r="3.5"/>
<circle cx="348.0" cy="408.5" r="3.5"/>
<circle cx="356.5" cy="408.5" r="3.5"/>
<circle cx="365.0" cy="408.5" r="3.5"/>
<circle cx="373.5" cy="408.5" r="3.5"/>
<circle cx="382.0" cy="408.5" r="3.5"/>
<circle cx="390.5" cy="408.5" r="3.5"/>
<circle cx="399.0" cy="408.5" r="3.5"/>
<circle cx="407.5" cy="408.5" r="3.5"/>
<circle cx="416.0" cy="408.5" r="3.5"/>
<circle cx="424.5" cy="408.5" r="3.5"/>
<circle cx="433.0" cy="408.5" r="3.5"/>
<circle cx="441.5" cy="408.5" r="2.2"/>
<circle cx="450.0" cy="408.5" r="2.2"/>
<circle cx="458.5" cy="408.5" r="2.2"/>
<circle cx="467.0" cy="408.5" r="2.2"/>
<circle cx="475.5" cy="408.5" r="2.2"/>
<circle cx="305.5" cy="417.0" r="3.5"/>
<circle cx="314.0" cy="417.0" r="3.5"/>
<circle cx="322.5" cy="417.0" r="3.5"/>
<circle cx="331.0" cy="417.0" r="3.5"/>
<circle cx="339.5" cy="417.0" r="3.5"/>
<circle cx="348.0" cy="417.0" r="3.5"/>
<circle cx="356.5" cy="417.0" r="3.5"/>
<circle cx="365.0" cy="417.0" r="3.5"/>
<circle cx="373.5" cy="417.0" r="3.5"/>
<circle cx="382.0" cy="417.0" r="3.5"/>
<circle cx="390.5" cy="417.0" r="3.5"/>
<circle cx="399.0" cy="417.0" r="3.5"/>
<circle cx="407.5" cy="417.0" r="3.5"/>
<circle cx="416.0" cy="417.0" r="3.5"/>
<circle cx="424.5" cy="417.0" r="3.5"/>
<circle cx="433.0" cy="417.0" r="3.5"/>
<circle cx="441.5" cy="417.0" r="2.3"/>
<circle cx="450.0" cy="417.0" r="2.3"/>
<circle cx="458.5" cy="417.0" r="2.3"/>
<circle cx="467.0" cy="417.0" r="2.3"/>
<circle cx="475.5" cy="417.0" r="2.3"/>
<circle cx="305.5" cy="425.5" r="3.5"/>
<circle cx="314.0" cy="425.5" r="3.5"/>
<circle cx="322.5" cy="425.5" r="3.5"/>
<circle cx="331.0" cy="425.5" r="3.5"/>
<circle cx="339.5" cy="425.5" r="3.5"/>
<circle cx="348.0" cy="425.5" r="3.5"/>
<circle cx="356.5" cy="425.5" r="3.5"/>
<circle cx="365.0" cy="425.5" r="3.5"/>
<circle cx="373.5" cy="425.5" r="3.5"/>
<circle cx="382.0" cy="425.5" r="3.5"/>
<circle cx="390.5" cy="425.5" r="3.5"/>
<circle cx="399.0" cy="425.5" r="3.5"/>
<circle cx="407.5" cy="425.5" r="3.5"/>
<circle cx="416.0" cy="425.5" r="3.5"/>
<circle cx="424.5" cy="425.5" r="3.5"/>
<circle cx="433.0" cy="425.5" r="3.5"/>
<circle cx="441.5" cy="425.5" r="2.4"/>
<circle cx="450.0" cy="425.5" r="2.4"/>
<circle cx="458.5" cy="425.5" r="2.4"/>
<circle cx="467.0" cy="425.5" r="2.4"/>
<circle cx="475.5" cy="425.5" r="2.4"/>
<circle cx="314.0" cy="434.0" r="3.5"/>
<circle cx="322.5" cy="434.0" r="3.5"/>
<circle cx="331.0" cy="434.0" r="3.5"/>
<circle cx="339.5" cy="434.0" r="3.5"/>
<circle cx="348.0" cy="434.0" r="3.5"/>
<circle cx="356.5" cy="434.0" r="3.5"/>
<circle cx="365.0" cy="434.0" r="3.5"/>
<circle cx="373.5" cy="434.0" r="3.5"/>
<circle cx="382.0" cy="434.0" r="3.5"/>
<circle cx="390.5" cy="434.0" r="3.5"/>
<circle cx="399.0" cy="434.0" r="3.5"/>
<circle cx="407.5" cy="434.0" r="3.5"/>
<circle cx="416.0" cy="434.0" r="3.5"/>
<circle cx="424.5" cy="434.0" r="3.5"/>
<circle cx="433.0" cy="434.0" r="3.5"/>
<circle cx="467.0" cy="434.0" r="2.5"/>
<circle cx="475.5" cy="434.0" r="2.5"/>
<circle cx="484.0" cy="434.0" r="2.5"/>
<circle cx="314.0" cy="442.5" r="3.5"/>
<circle cx="322.5" cy="442.5" r="3.5"/>
<circle cx="331.0" cy="442.5" r="3.5"/>
<circle cx="339.5" cy="442.5" r="3.5"/>
<circle cx="348.0" cy="442.5" r="3.5"/>
<circle cx="356.5" cy="442.5" r="3.5"/>
<circle cx="365.0" cy="442.5" r="3.5"/>
<circle cx="373.5" cy="442.5" r="3.5"/>
<circle cx="382.0" cy="442.5" r="3.5"/>
<circle cx="390.5" cy="442.5" r="3.5"/>
<circle cx="399.0" cy="442.5" r="3.5"/>
<circle cx="407.5" cy="442.5" r="3.5"/>
<circle cx="416.0" cy="442.5" r="3.5"/>
<circle cx="424.5" cy="442.5" r="3.5"/>
<circle cx="475.5" cy="442.5" r="2.6"/>
<circle cx="484.0" cy="442.5" r="2.6"/>
<circle cx="314.0" cy="451.0" r="3.5"/>
<circle cx="322.5" cy="451.0" r="3.5"/>
<circle cx="331.0" cy="451.0" r="3.5"/>
<circle cx="339.5" cy="451.0" r="3.5"/>
<circle cx="348.0" cy="451.0" r="3.5"/>
<circle cx="356.5" cy="451.0" r="3.5"/>
<circle cx="365.0" cy="451.0" r="3.5"/>
<circle cx="373.5" cy="451.0" r="3.5"/>
<circle cx="382.0" cy="451.0" r="3.5"/>
<circle cx="390.5" cy="451.0" r="3.5"/>
<circle cx="399.0" cy="451.0" r="3.5"/>
<circle cx="407.5" cy="451.0" r="3.5"/>
<circle cx="416.0" cy="451.0" r="3.5"/>
<circle cx="475.5" cy="451.0" r="2.6"/>
<circle cx="484.0" cy="451.0" r="2.6"/>
<circle cx="492.5" cy="451.0" r="2.6"/>
<circle cx="501.0" cy="451.0" r="2.6"/>
<circle cx="322.5" cy="459.5" r="3.5"/>
<circle cx="331.0" cy="459.5" r="3.5"/>
<circle cx="339.5" cy="459.5" r="3.5"/>
<circle cx="484.0" cy="459.5" r="2.6"/>
<circle cx="492.5" cy="459.5" r="2.6"/>
<circle cx="501.0" cy="459.5" r="2.6"/>
<circle cx="509.5" cy="459.5" r="2.6"/>
<circle cx="518.0" cy="459.5" r="2.6"/>
<circle cx="322.5" cy="468.0" r="3.5"/>
<circle cx="492.5" cy="468.0" r="2.6"/>
<circle cx="501.0" cy="468.0" r="2.6"/>
<circle cx="509.5" cy="468.0" r="2.6"/>
<circle cx="518.0" cy="468.0" r="2.6"/>
<circle cx="526.5" cy="468.0" r="2.6"/>
<circle cx="501.0" cy="476.5" r="2.6"/>
<circle cx="509.5" cy="476.5" r="2.6"/>
<circle cx="518.0" cy="476.5" r="2.6"/>
<circle cx="526.5" cy="476.5" r="2.6"/>
<circle cx="535.0" cy="476.5" r="2.6"/>
<circle cx="543.5" cy="476.5" r="2.6"/>
<circle cx="509.5" cy="485.0" r="2.6"/>
<circle cx="518.0" cy="485.0" r="2.6"/>
<circle cx="526.5" cy="485.0" r="2.6"/>
<circle cx="535.0" cy="485.0" r="2.6"/>
<circle cx="543.5" cy="485.0" r="2.6"/>
<circle cx="518.0" cy="493.5" r="2.6"/>
<circle cx="526.5" cy="493.5" r="2.6"/>
<circle cx="535.0" cy="493.5" r="2.6"/>
<circle cx="543.5" cy="493.5" r="2.6"/>
<circle cx="552.0" cy="493.5" r="2.6"/>
<circle cx="552.0" cy="502.0" r="2.6"/>
</g>
<g fill="#3b1238">
<circle cx="334.0" cy="289.0" r="1.6"/>
<circle cx="340.0" cy="284.0" r="1.6"/>
<circle cx="346.0" cy="279.0" r="1.5"/>
<circle cx="328.0" cy="292.0" r="1.2"/>
<circle cx="350.0" cy="274.0" r="1.1"/>
<circle cx="324.0" cy="296.0" r="1.0"/>
<circle cx="337.0" cy="279.0" r="1.0"/>
<circle cx="343.0" cy="274.0" r="0.9"/>
<circle cx="390.0" cy="271.0" r="1.1"/>
<circle cx="396.0" cy="274.0" r="0.9"/>
</g>
<path d="M322.0 470.0 C326.2 463.7 327.4 466.3 333.0 463.0 C338.6 459.7 339.2 458.4 346.0 456.0 C352.8 453.6 354.1 453.4 362.0 452.5 C369.9 451.6 371.1 452.1 380.0 452.0 C388.9 451.9 390.7 452.9 400.0 452.0 C409.3 451.1 413.7 452.7 420.0 448.0 C426.3 443.3 426.1 439.0 427.0 432.0 C427.9 425.0 426.3 423.1 424.0 418.0 C421.7 412.9 415.6 413.0 417.0 410.0 C418.4 407.0 423.2 412.5 430.0 405.0 C436.8 397.5 441.3 381.5 446.0 378.0 C450.7 374.5 447.9 382.5 450.0 390.0 C452.1 397.5 452.2 400.7 455.0 410.0 C457.8 419.3 458.0 421.4 462.0 430.0 C466.0 438.6 467.3 441.2 472.0 447.0 C476.7 452.8 477.8 453.8 482.0 455.0 C486.2 456.2 484.9 453.4 490.0 452.0 C495.1 450.6 497.2 449.2 504.0 449.0 C510.8 448.8 512.0 448.7 519.0 451.0 C526.0 453.3 528.4 455.0 534.0 459.0 C539.6 463.0 539.5 462.9 543.0 468.0 C546.5 473.1 546.7 475.2 549.0 481.0 C551.3 486.8 550.4 487.4 553.0 493.0 C555.6 498.6 554.9 498.7 560.0 505.0 C565.1 511.3 567.5 511.8 575.0 520.0 C582.5 528.2 586.2 530.7 592.0 540.0 C597.8 549.3 607.5 546.0 600.0 560.0 C592.5 574.0 588.0 586.0 560.0 600.0 C532.0 614.0 512.7 617.7 480.0 620.0 C447.3 622.3 439.6 616.1 420.0 610.0 C400.4 603.9 406.7 601.5 396.0 594.0 C385.3 586.5 380.5 576.6 374.0 578.0 C367.5 579.4 370.3 589.0 368.0 600.0 C365.7 611.0 365.4 613.3 364.0 625.0 C362.6 636.7 362.7 632.5 362.0 650.0 C361.3 667.5 361.2 672.0 361.0 700.0 C360.8 728.0 372.7 753.7 361.0 770.0 C349.3 786.3 322.8 801.3 311.0 770.0 C299.2 738.7 310.5 682.7 310.5 636.0 C310.5 589.3 310.6 597.1 311.0 570.0 C311.4 542.9 311.1 538.7 312.0 520.0 C312.9 501.3 312.7 501.7 315.0 490.0 C317.3 478.3 317.8 476.3 322.0 470.0Z" fill="#f0c6a7"/>
<path d="M330.5 324.0 C331.0 316.0 329.6 317.2 333.5 309.5 C337.4 301.8 338.3 300.7 345.0 295.0 C351.7 289.3 350.9 290.4 358.5 288.3 C366.1 286.2 364.8 286.3 373.5 287.0 C382.2 287.7 382.3 287.5 391.0 290.8 C399.7 294.1 398.0 293.8 406.0 299.5 C414.0 305.2 413.7 304.7 421.0 312.0 C428.3 319.3 428.4 319.0 433.5 327.0 C438.6 335.0 437.2 333.2 440.0 342.0 C442.8 350.8 442.1 351.2 444.0 360.0 C445.9 368.8 445.7 366.5 447.0 375.0 C448.3 383.5 450.9 384.3 449.0 392.0 C447.1 399.7 445.6 399.2 440.0 404.0 C434.4 408.8 434.1 408.4 428.0 410.0 C421.9 411.6 423.1 411.6 417.0 410.0 C410.9 408.4 413.5 406.4 405.0 404.0 C396.5 401.6 395.7 403.9 385.0 401.0 C374.3 398.1 374.3 398.1 365.0 393.0 C355.7 387.9 356.7 388.7 350.0 382.0 C343.3 375.3 343.7 374.7 340.0 368.0 C336.3 361.3 338.2 364.6 336.0 357.0 C333.8 349.4 333.1 348.3 331.6 339.5 C330.1 330.7 330.0 332.0 330.5 324.0Z" fill="#f0c6a7" stroke="#2a1608" stroke-width="0.8"/>
<path d="M417.0 408.0 C421.2 394.9 437.8 379.0 446.0 376.0 C454.2 373.0 449.4 386.6 452.0 395.0 C454.6 403.4 454.0 403.4 457.0 412.0 C460.0 420.6 460.6 423.1 465.0 432.0 C469.4 440.9 474.8 441.1 476.0 450.0 C477.2 458.9 478.4 464.2 470.0 470.0 C461.6 475.8 450.3 478.5 440.0 475.0 C429.7 471.5 428.8 465.0 426.0 455.0 C423.2 445.0 430.1 443.0 428.0 432.0 C425.9 421.0 412.8 421.1 417.0 408.0Z" fill="#f0c6a7"/>
<path d="M582.0 648.0 C584.2 648.4 584.7 660.6 586.0 670.0 C587.3 679.4 587.5 685.0 588.5 695.0 C589.5 705.0 590.1 705.0 591.0 720.0 C591.9 735.0 598.8 760.0 593.0 770.0 C587.2 780.0 567.4 780.0 562.0 770.0 C556.6 760.0 564.4 735.0 566.0 720.0 C567.6 705.0 568.2 705.4 570.0 695.0 C571.8 684.6 572.6 677.4 575.0 668.0 C577.4 658.6 579.8 647.6 582.0 648.0Z" fill="#f0c6a7"/>
<path d="M328.5 352.0 C330.6 352.5 330.3 357.7 333.0 362.0 C335.7 366.3 334.4 362.7 338.5 368.0 C342.6 373.3 342.5 375.2 348.5 382.0 C354.5 388.8 352.3 388.4 361.0 393.5 C369.7 398.6 369.7 398.3 381.0 401.0 C392.3 403.7 394.2 401.8 403.5 403.5 C412.8 405.2 410.7 403.1 416.0 407.5 C421.3 411.9 420.6 413.3 423.5 420.0 C426.4 426.7 426.7 426.9 427.0 432.5 C427.3 438.1 427.7 437.0 424.5 441.0 C421.3 445.0 421.5 445.4 415.0 447.5 C408.5 449.6 408.3 448.6 400.0 449.0 C391.7 449.4 390.4 451.4 384.0 449.0 C377.6 446.6 380.8 445.1 376.0 440.0 C371.2 434.9 371.3 435.3 366.0 430.0 C360.7 424.7 362.7 426.0 356.0 420.0 C349.3 414.0 347.7 415.2 341.0 407.5 C334.3 399.8 335.0 399.7 331.0 391.0 C327.0 382.3 327.6 383.3 326.0 375.0 C324.4 366.7 324.3 366.1 325.0 360.0 C325.7 353.9 326.4 351.5 328.5 352.0Z" fill="#5e3b1b"/>
<g fill="#e3a783">
<circle cx="424.5" cy="374.5" r="1.9"/>
<circle cx="433.0" cy="374.5" r="2.9"/>
<circle cx="441.5" cy="374.5" r="3.1"/>
<circle cx="450.0" cy="374.5" r="2.4"/>
<circle cx="458.5" cy="374.5" r="0.9"/>
<circle cx="407.5" cy="383.0" r="1.2"/>
<circle cx="416.0" cy="383.0" r="3.4"/>
<circle cx="424.5" cy="383.0" r="4.6"/>
<circle cx="433.0" cy="383.0" r="4.9"/>
<circle cx="441.5" cy="383.0" r="4.7"/>
<circle cx="450.0" cy="383.0" r="3.6"/>
<circle cx="458.5" cy="383.0" r="1.6"/>
<circle cx="399.0" cy="391.5" r="0.9"/>
<circle cx="407.5" cy="391.5" r="3.4"/>
<circle cx="416.0" cy="391.5" r="4.8"/>
<circle cx="424.5" cy="391.5" r="5.4"/>
<circle cx="433.0" cy="391.5" r="5.3"/>
<circle cx="441.5" cy="391.5" r="4.7"/>
<circle cx="450.0" cy="391.5" r="3.2"/>
<circle cx="458.5" cy="391.5" r="0.6"/>
<circle cx="399.0" cy="400.0" r="2.0"/>
<circle cx="407.5" cy="400.0" r="3.9"/>
<circle cx="416.0" cy="400.0" r="4.8"/>
<circle cx="424.5" cy="400.0" r="5.0"/>
<circle cx="433.0" cy="400.0" r="4.6"/>
<circle cx="441.5" cy="400.0" r="3.4"/>
<circle cx="450.0" cy="400.0" r="1.1"/>
<circle cx="424.5" cy="408.5" r="3.2"/>
<circle cx="433.0" cy="408.5" r="2.1"/>
<circle cx="348.0" cy="374.5" r="0.8"/>
<circle cx="356.5" cy="374.5" r="1.2"/>
<circle cx="365.0" cy="374.5" r="0.5"/>
<circle cx="356.5" cy="383.0" r="0.9"/>
<circle cx="365.0" cy="383.0" r="2.1"/>
<circle cx="373.5" cy="383.0" r="2.0"/>
<circle cx="382.0" cy="383.0" r="0.7"/>
<circle cx="373.5" cy="391.5" r="1.2"/>
<circle cx="382.0" cy="391.5" r="1.9"/>
<circle cx="390.5" cy="391.5" r="1.2"/>
<circle cx="339.5" cy="323.5" r="0.4"/>
<circle cx="339.5" cy="332.0" r="1.2"/>
<circle cx="339.5" cy="340.5" r="1.7"/>
<circle cx="339.5" cy="349.0" r="1.8"/>
<circle cx="339.5" cy="357.5" r="1.3"/>
<circle cx="339.5" cy="366.0" r="0.5"/>
<circle cx="390.5" cy="553.0" r="1.2"/>
<circle cx="399.0" cy="553.0" r="1.1"/>
<circle cx="373.5" cy="561.5" r="1.3"/>
<circle cx="382.0" cy="561.5" r="2.9"/>
<circle cx="390.5" cy="561.5" r="3.6"/>
<circle cx="399.0" cy="561.5" r="3.6"/>
<circle cx="407.5" cy="561.5" r="2.7"/>
<circle cx="416.0" cy="561.5" r="0.9"/>
<circle cx="373.5" cy="570.0" r="2.6"/>
<circle cx="382.0" cy="570.0" r="4.1"/>
<circle cx="390.5" cy="570.0" r="4.8"/>
<circle cx="399.0" cy="570.0" r="4.7"/>
<circle cx="407.5" cy="570.0" r="3.9"/>
<circle cx="416.0" cy="570.0" r="2.3"/>
<circle cx="373.5" cy="578.5" r="2.7"/>
<circle cx="382.0" cy="578.5" r="4.2"/>
<circle cx="390.5" cy="578.5" r="4.9"/>
<circle cx="399.0" cy="578.5" r="4.8"/>
<circle cx="407.5" cy="578.5" r="4.0"/>
<circle cx="416.0" cy="578.5" r="2.4"/>
<circle cx="382.0" cy="587.0" r="3.2"/>
<circle cx="390.5" cy="587.0" r="3.9"/>
<circle cx="399.0" cy="587.0" r="3.9"/>
<circle cx="407.5" cy="587.0" r="3.0"/>
<circle cx="416.0" cy="587.0" r="1.3"/>
<circle cx="390.5" cy="595.5" r="1.7"/>
<circle cx="399.0" cy="595.5" r="1.6"/>
<circle cx="407.5" cy="595.5" r="0.7"/>
<circle cx="356.5" cy="570.0" r="0.8"/>
<circle cx="356.5" cy="578.5" r="1.3"/>
<circle cx="365.0" cy="578.5" r="0.7"/>
<circle cx="356.5" cy="587.0" r="1.7"/>
<circle cx="365.0" cy="587.0" r="1.2"/>
<circle cx="356.5" cy="595.5" r="2.0"/>
<circle cx="365.0" cy="595.5" r="1.5"/>
<circle cx="356.5" cy="604.0" r="2.2"/>
<circle cx="365.0" cy="604.0" r="1.7"/>
<circle cx="356.5" cy="612.5" r="2.3"/>
<circle cx="365.0" cy="612.5" r="1.8"/>
<circle cx="356.5" cy="621.0" r="2.3"/>
<circle cx="356.5" cy="629.5" r="2.3"/>
<circle cx="356.5" cy="638.0" r="2.2"/>
<circle cx="356.5" cy="646.5" r="2.0"/>
<circle cx="356.5" cy="655.0" r="1.8"/>
<circle cx="356.5" cy="663.5" r="1.4"/>
<circle cx="356.5" cy="672.0" r="0.9"/>
<circle cx="577.5" cy="672.0" r="1.2"/>
<circle cx="586.0" cy="672.0" r="2.8"/>
<circle cx="577.5" cy="680.5" r="1.8"/>
<circle cx="586.0" cy="680.5" r="3.2"/>
<circle cx="577.5" cy="689.0" r="2.3"/>
<circle cx="586.0" cy="689.0" r="3.4"/>
<circle cx="577.5" cy="697.5" r="2.6"/>
<circle cx="586.0" cy="697.5" r="3.6"/>
<circle cx="577.5" cy="706.0" r="2.7"/>
<circle cx="586.0" cy="706.0" r="3.6"/>
<circle cx="577.5" cy="714.5" r="2.7"/>
<circle cx="586.0" cy="714.5" r="3.6"/>
<circle cx="577.5" cy="723.0" r="2.6"/>
<circle cx="586.0" cy="723.0" r="3.6"/>
<circle cx="577.5" cy="731.5" r="2.4"/>
<circle cx="586.0" cy="731.5" r="3.5"/>
<circle cx="577.5" cy="740.0" r="2.0"/>
<circle cx="586.0" cy="740.0" r="3.3"/>
<circle cx="577.5" cy="748.5" r="1.5"/>
<circle cx="586.0" cy="748.5" r="3.0"/>
<circle cx="577.5" cy="757.0" r="0.8"/>
<circle cx="586.0" cy="757.0" r="2.4"/>
<circle cx="586.0" cy="765.5" r="1.7"/>
<circle cx="518.0" cy="502.0" r="1.3"/>
<circle cx="526.5" cy="502.0" r="1.5"/>
<circle cx="535.0" cy="502.0" r="0.7"/>
</g>
<path d="M446.0 375.0 C447.4 383.4 447.9 381.8 450.0 390.0 C452.1 398.2 452.4 401.8 455.0 410.0 C457.6 418.2 457.5 417.5 461.0 425.0 C464.5 432.5 464.9 432.9 470.0 442.0 C475.1 451.1 475.5 454.9 483.0 464.0 C490.5 473.1 494.5 474.5 502.0 481.0 C509.5 487.5 510.7 487.8 515.0 492.0 C519.3 496.2 517.9 497.4 520.5 499.0 C523.1 500.6 523.8 500.6 526.0 499.0 C528.2 497.4 527.4 492.7 530.0 492.0 C532.6 491.3 533.5 494.6 537.0 496.0 C540.5 497.4 542.0 496.4 545.0 498.0 C548.0 499.6 547.8 502.1 550.0 503.0 C552.2 503.9 553.1 503.6 554.5 502.0 C555.9 500.4 557.0 499.7 556.0 496.0 C555.0 492.3 554.4 491.6 550.0 486.0 C545.6 480.4 543.5 477.6 537.0 472.0 C530.5 466.4 529.7 466.9 522.0 462.0 C514.3 457.1 511.5 455.2 504.0 451.0 C496.5 446.8 495.4 448.9 490.0 444.0 C484.6 439.1 483.8 437.5 481.0 430.0 C478.2 422.5 479.4 420.2 478.0 412.0 C476.6 403.8 476.6 403.2 475.0 395.0 C473.4 386.8 473.3 384.7 471.0 377.0 C468.7 369.3 468.5 368.8 465.0 362.0 C461.5 355.2 460.9 349.9 456.0 348.0 C451.1 346.1 446.3 347.7 444.0 354.0 C441.7 360.3 444.6 366.6 446.0 375.0Z" fill="#9f7a48"/>
<path d="M446.0 375.0 C446.9 378.5 447.9 381.8 450.0 390.0 C452.1 398.2 452.4 401.8 455.0 410.0 C457.6 418.2 457.5 417.5 461.0 425.0 C464.5 432.5 464.9 432.9 470.0 442.0 C475.1 451.1 475.5 454.9 483.0 464.0 C490.5 473.1 494.5 474.5 502.0 481.0 C509.5 487.5 510.7 487.8 515.0 492.0 C519.3 496.2 517.9 497.4 520.5 499.0 C523.1 500.6 523.8 500.6 526.0 499.0 C528.2 497.4 527.4 492.7 530.0 492.0 C532.6 491.3 533.5 494.6 537.0 496.0 C540.5 497.4 542.0 496.4 545.0 498.0 C548.0 499.6 547.8 502.1 550.0 503.0 C552.2 503.9 553.1 503.6 554.5 502.0 C555.9 500.4 557.0 499.7 556.0 496.0 C555.0 492.3 554.4 491.6 550.0 486.0 C545.6 480.4 543.5 477.6 537.0 472.0 C530.5 466.4 529.7 466.9 522.0 462.0 C514.3 457.1 511.5 455.2 504.0 451.0 C496.5 446.8 495.4 448.9 490.0 444.0 C484.6 439.1 483.8 437.5 481.0 430.0 C478.2 422.5 479.4 420.2 478.0 412.0 C476.6 403.8 476.6 403.2 475.0 395.0 C473.4 386.8 471.9 381.2 471.0 377.0" fill="none" stroke="#1a0f08" stroke-width="1"/>
<path d="M476 452 C490 470 510 480 532 488 C540 492 548 497 551 501 L545 497 L537 495 L530 491 L525 498 L520 498 L514 490 C500 480 486 468 476 452Z" fill="#70491f"/>
<g fill="#6c4624">
<circle cx="450.0" cy="374.5" r="1.5"/>
<circle cx="458.5" cy="374.5" r="1.5"/>
<circle cx="467.0" cy="374.5" r="1.5"/>
<circle cx="450.0" cy="383.0" r="1.5"/>
<circle cx="458.5" cy="383.0" r="1.5"/>
<circle cx="467.0" cy="383.0" r="1.5"/>
<circle cx="458.5" cy="391.5" r="1.5"/>
<circle cx="467.0" cy="391.5" r="1.5"/>
<circle cx="458.5" cy="400.0" r="1.5"/>
<circle cx="467.0" cy="400.0" r="1.5"/>
<circle cx="475.5" cy="400.0" r="1.5"/>
<circle cx="458.5" cy="408.5" r="1.5"/>
<circle cx="467.0" cy="408.5" r="1.5"/>
<circle cx="475.5" cy="408.5" r="1.5"/>
<circle cx="458.5" cy="417.0" r="1.5"/>
<circle cx="467.0" cy="417.0" r="1.5"/>
<circle cx="475.5" cy="417.0" r="1.5"/>
<circle cx="467.0" cy="425.5" r="1.5"/>
<circle cx="475.5" cy="425.5" r="1.5"/>
<circle cx="467.0" cy="434.0" r="2.7"/>
<circle cx="475.5" cy="434.0" r="2.7"/>
<circle cx="475.5" cy="442.5" r="2.7"/>
<circle cx="484.0" cy="442.5" r="2.7"/>
<circle cx="475.5" cy="451.0" r="2.7"/>
<circle cx="484.0" cy="451.0" r="2.7"/>
<circle cx="492.5" cy="451.0" r="2.7"/>
<circle cx="501.0" cy="451.0" r="2.7"/>
<circle cx="484.0" cy="459.5" r="2.7"/>
<circle cx="492.5" cy="459.5" r="2.7"/>
<circle cx="501.0" cy="459.5" r="2.7"/>
<circle cx="509.5" cy="459.5" r="2.7"/>
<circle cx="492.5" cy="468.0" r="2.7"/>
<circle cx="501.0" cy="468.0" r="2.7"/>
<circle cx="509.5" cy="468.0" r="2.7"/>
<circle cx="518.0" cy="468.0" r="2.7"/>
<circle cx="526.5" cy="468.0" r="2.7"/>
<circle cx="501.0" cy="476.5" r="2.7"/>
<circle cx="509.5" cy="476.5" r="2.7"/>
<circle cx="518.0" cy="476.5" r="2.7"/>
<circle cx="526.5" cy="476.5" r="2.7"/>
<circle cx="535.0" cy="476.5" r="2.7"/>
<circle cx="509.5" cy="485.0" r="2.7"/>
<circle cx="518.0" cy="485.0" r="2.7"/>
<circle cx="526.5" cy="485.0" r="2.7"/>
<circle cx="535.0" cy="485.0" r="2.7"/>
<circle cx="543.5" cy="485.0" r="2.7"/>
<circle cx="518.0" cy="493.5" r="2.7"/>
<circle cx="526.5" cy="493.5" r="2.7"/>
<circle cx="535.0" cy="493.5" r="2.7"/>
<circle cx="543.5" cy="493.5" r="2.7"/>
<circle cx="552.0" cy="493.5" r="2.7"/>
<circle cx="552.0" cy="502.0" r="2.7"/>
</g>
<path d="M379.0 452.0 C377.4 454.6 385.8 460.4 392.0 467.0 C398.2 473.6 402.4 477.4 410.0 485.0 C417.6 492.6 423.6 496.0 430.0 505.0 C436.4 514.0 439.0 522.0 442.0 530.0 C445.0 538.0 445.0 539.0 445.0 545.0 C445.0 551.0 443.6 555.0 442.0 560.0 C440.4 565.0 440.0 566.0 437.0 570.0 C434.0 574.0 431.4 576.6 427.0 580.0 C422.6 583.4 420.0 584.6 415.0 587.0 C410.0 589.4 407.0 590.0 402.0 592.0 C397.0 594.0 391.0 593.4 390.0 597.0 C389.0 600.6 393.0 603.8 397.0 610.0 C401.0 616.2 406.0 620.4 410.0 628.0 C414.0 635.6 414.0 640.6 417.0 648.0 C420.0 655.4 423.2 658.6 425.0 665.0 C426.8 671.4 426.6 674.0 426.0 680.0 C425.4 686.0 423.8 688.6 422.0 695.0 C420.2 701.4 420.0 705.0 417.0 712.0 C414.0 719.0 411.4 722.8 407.0 730.0 C402.6 737.2 398.8 741.6 395.0 748.0 C391.2 754.4 389.8 753.6 388.0 762.0 C386.2 770.4 350.4 784.4 386.0 790.0 C421.6 795.6 530.8 796.0 566.0 790.0 C601.2 784.0 562.4 770.0 562.0 760.0 C561.6 750.0 563.2 748.0 564.0 740.0 C564.8 732.0 565.0 728.0 566.0 720.0 C567.0 712.0 567.8 708.0 569.0 700.0 C570.2 692.0 570.4 688.0 572.0 680.0 C573.6 672.0 575.4 666.0 577.0 660.0 C578.6 654.0 578.6 653.0 580.0 650.0 C581.4 647.0 582.0 648.6 584.0 645.0 C586.0 641.4 587.4 637.6 590.0 632.0 C592.6 626.4 594.0 623.0 597.0 617.0 C600.0 611.0 602.8 608.4 605.0 602.0 C607.2 595.6 607.6 592.0 608.0 585.0 C608.4 578.0 608.2 573.6 607.0 567.0 C605.8 560.4 605.0 557.4 602.0 552.0 C599.0 546.6 596.4 545.4 592.0 540.0 C587.6 534.6 585.0 531.0 580.0 525.0 C575.0 519.0 572.0 515.6 567.0 510.0 C562.0 504.4 559.4 499.6 555.0 497.0 C550.6 494.4 544.6 495.0 545.0 497.0 C545.4 499.0 553.0 502.4 557.0 507.0 C561.0 511.6 564.0 515.0 565.0 520.0 C566.0 525.0 565.0 527.0 562.0 532.0 C559.0 537.0 556.4 541.4 550.0 545.0 C543.6 548.6 539.0 549.6 530.0 550.0 C521.0 550.4 515.0 549.6 505.0 547.0 C495.0 544.4 490.0 542.4 480.0 537.0 C470.0 531.6 464.0 528.4 455.0 520.0 C446.0 511.6 443.0 505.0 435.0 495.0 C427.0 485.0 422.0 478.2 415.0 470.0 C408.0 461.8 407.2 457.6 400.0 454.0 C392.8 450.4 380.6 449.4 379.0 452.0Z" fill="#b5dff3" stroke="#16242e" stroke-width="1"/>
<path d="M385.0 455.0 C388.5 458.5 391.8 461.8 400.0 470.0 C408.2 478.2 411.1 480.2 420.0 490.0 C428.9 499.8 431.2 501.5 438.0 512.0 C444.8 522.5 446.0 526.1 449.0 535.0 C452.0 543.9 451.5 542.8 451.0 550.0 C450.5 557.2 450.0 559.5 447.0 566.0 C444.0 572.5 443.1 572.9 438.0 578.0 C432.9 583.1 432.0 583.8 425.0 588.0 C418.0 592.2 415.5 593.0 408.0 596.0 C400.5 599.0 396.5 599.8 393.0 601.0" fill="none" stroke="#1f3a4a" stroke-width="0.9"/>
<path d="M404.0 462.0 C407.7 466.2 411.6 470.2 420.0 480.0 C428.4 489.8 430.7 493.0 440.0 504.0 C449.3 515.0 449.7 517.9 460.0 527.0 C470.3 536.1 472.8 537.2 484.0 543.0 C495.2 548.8 496.8 549.2 508.0 552.0 C519.2 554.8 521.5 555.5 532.0 555.0 C542.5 554.5 545.1 554.4 553.0 550.0 C560.9 545.6 562.3 542.8 566.0 536.0 C569.7 529.2 569.9 527.5 569.0 521.0 C568.1 514.5 563.6 511.0 562.0 508.0" fill="none" stroke="#1f3a4a" stroke-width="0.9"/>
<g fill="#84bde3">
<circle cx="587.5" cy="564.5" r="0.5"/>
<circle cx="528.0" cy="573.0" r="0.5"/>
<circle cx="536.5" cy="573.0" r="0.6"/>
<circle cx="545.0" cy="573.0" r="0.6"/>
<circle cx="553.5" cy="573.0" r="0.6"/>
<circle cx="562.0" cy="573.0" r="0.5"/>
<circle cx="570.5" cy="573.0" r="0.6"/>
<circle cx="579.0" cy="573.0" r="1.1"/>
<circle cx="587.5" cy="573.0" r="1.4"/>
<circle cx="596.0" cy="573.0" r="1.2"/>
<circle cx="604.5" cy="573.0" r="0.7"/>
<circle cx="511.0" cy="581.5" r="0.5"/>
<circle cx="519.5" cy="581.5" r="0.6"/>
<circle cx="528.0" cy="581.5" r="0.7"/>
<circle cx="536.5" cy="581.5" r="0.8"/>
<circle cx="545.0" cy="581.5" r="0.8"/>
<circle cx="553.5" cy="581.5" r="0.8"/>
<circle cx="562.0" cy="581.5" r="0.7"/>
<circle cx="570.5" cy="581.5" r="1.2"/>
<circle cx="579.0" cy="581.5" r="1.9"/>
<circle cx="587.5" cy="581.5" r="2.2"/>
<circle cx="596.0" cy="581.5" r="2.0"/>
<circle cx="604.5" cy="581.5" r="1.3"/>
<circle cx="502.5" cy="590.0" r="0.5"/>
<circle cx="511.0" cy="590.0" r="0.7"/>
<circle cx="519.5" cy="590.0" r="0.8"/>
<circle cx="528.0" cy="590.0" r="0.8"/>
<circle cx="536.5" cy="590.0" r="0.9"/>
<circle cx="545.0" cy="590.0" r="0.9"/>
<circle cx="553.5" cy="590.0" r="0.9"/>
<circle cx="562.0" cy="590.0" r="0.8"/>
<circle cx="570.5" cy="590.0" r="1.6"/>
<circle cx="579.0" cy="590.0" r="2.3"/>
<circle cx="587.5" cy="590.0" r="2.5"/>
<circle cx="596.0" cy="590.0" r="2.4"/>
<circle cx="604.5" cy="590.0" r="1.8"/>
<circle cx="477.0" cy="598.5" r="0.9"/>
<circle cx="485.5" cy="598.5" r="1.4"/>
<circle cx="494.0" cy="598.5" r="1.4"/>
<circle cx="502.5" cy="598.5" r="0.9"/>
<circle cx="511.0" cy="598.5" r="1.0"/>
<circle cx="519.5" cy="598.5" r="1.4"/>
<circle cx="528.0" cy="598.5" r="1.6"/>
<circle cx="536.5" cy="598.5" r="1.8"/>
<circle cx="545.0" cy="598.5" r="1.7"/>
<circle cx="553.5" cy="598.5" r="1.6"/>
<circle cx="562.0" cy="598.5" r="1.3"/>
<circle cx="570.5" cy="598.5" r="1.7"/>
<circle cx="579.0" cy="598.5" r="2.4"/>
<circle cx="587.5" cy="598.5" r="2.5"/>
<circle cx="596.0" cy="598.5" r="2.4"/>
<circle cx="604.5" cy="598.5" r="1.8"/>
<circle cx="468.5" cy="607.0" r="0.7"/>
<circle cx="477.0" cy="607.0" r="1.8"/>
<circle cx="485.5" cy="607.0" r="2.5"/>
<circle cx="494.0" cy="607.0" r="2.5"/>
<circle cx="502.5" cy="607.0" r="1.9"/>
<circle cx="511.0" cy="607.0" r="1.7"/>
<circle cx="519.5" cy="607.0" r="2.0"/>
<circle cx="528.0" cy="607.0" r="2.2"/>
<circle cx="536.5" cy="607.0" r="2.3"/>
<circle cx="545.0" cy="607.0" r="2.3"/>
<circle cx="553.5" cy="607.0" r="2.2"/>
<circle cx="562.0" cy="607.0" r="2.0"/>
<circle cx="570.5" cy="607.0" r="1.6"/>
<circle cx="579.0" cy="607.0" r="2.1"/>
<circle cx="587.5" cy="607.0" r="2.4"/>
<circle cx="596.0" cy="607.0" r="2.2"/>
<circle cx="468.5" cy="615.5" r="1.1"/>
<circle cx="477.0" cy="615.5" r="2.4"/>
<circle cx="485.5" cy="615.5" r="3.0"/>
<circle cx="494.0" cy="615.5" r="3.0"/>
<circle cx="502.5" cy="615.5" r="2.5"/>
<circle cx="511.0" cy="615.5" r="1.7"/>
<circle cx="519.5" cy="615.5" r="2.0"/>
<circle cx="528.0" cy="615.5" r="2.2"/>
<circle cx="536.5" cy="615.5" r="2.3"/>
<circle cx="545.0" cy="615.5" r="2.3"/>
<circle cx="553.5" cy="615.5" r="2.2"/>
<circle cx="562.0" cy="615.5" r="2.0"/>
<circle cx="570.5" cy="615.5" r="1.6"/>
<circle cx="579.0" cy="615.5" r="1.5"/>
<circle cx="587.5" cy="615.5" r="1.8"/>
<circle cx="596.0" cy="615.5" r="1.5"/>
<circle cx="468.5" cy="624.0" r="1.1"/>
<circle cx="477.0" cy="624.0" r="2.4"/>
<circle cx="485.5" cy="624.0" r="3.0"/>
<circle cx="494.0" cy="624.0" r="3.0"/>
<circle cx="502.5" cy="624.0" r="2.5"/>
<circle cx="511.0" cy="624.0" r="1.2"/>
<circle cx="519.5" cy="624.0" r="1.3"/>
<circle cx="528.0" cy="624.0" r="1.6"/>
<circle cx="536.5" cy="624.0" r="1.7"/>
<circle cx="545.0" cy="624.0" r="2.1"/>
<circle cx="553.5" cy="624.0" r="2.4"/>
<circle cx="562.0" cy="624.0" r="2.1"/>
<circle cx="570.5" cy="624.0" r="1.3"/>
<circle cx="579.0" cy="624.0" r="0.9"/>
<circle cx="587.5" cy="624.0" r="0.9"/>
<circle cx="468.5" cy="632.5" r="0.8"/>
<circle cx="477.0" cy="632.5" r="1.9"/>
<circle cx="485.5" cy="632.5" r="2.6"/>
<circle cx="494.0" cy="632.5" r="2.6"/>
<circle cx="502.5" cy="632.5" r="1.9"/>
<circle cx="511.0" cy="632.5" r="0.9"/>
<circle cx="519.5" cy="632.5" r="0.9"/>
<circle cx="528.0" cy="632.5" r="0.9"/>
<circle cx="536.5" cy="632.5" r="1.8"/>
<circle cx="545.0" cy="632.5" r="2.6"/>
<circle cx="553.5" cy="632.5" r="2.9"/>
<circle cx="562.0" cy="632.5" r="2.6"/>
<circle cx="570.5" cy="632.5" r="1.8"/>
<circle cx="579.0" cy="632.5" r="0.9"/>
<circle cx="587.5" cy="632.5" r="0.9"/>
<circle cx="477.0" cy="641.0" r="0.9"/>
<circle cx="485.5" cy="641.0" r="1.5"/>
<circle cx="494.0" cy="641.0" r="1.5"/>
<circle cx="502.5" cy="641.0" r="1.0"/>
<circle cx="511.0" cy="641.0" r="0.9"/>
<circle cx="519.5" cy="641.0" r="0.9"/>
<circle cx="528.0" cy="641.0" r="0.9"/>
<circle cx="536.5" cy="641.0" r="2.2"/>
<circle cx="545.0" cy="641.0" r="3.0"/>
<circle cx="553.5" cy="641.0" r="3.1"/>
<circle cx="562.0" cy="641.0" r="3.0"/>
<circle cx="570.5" cy="641.0" r="2.2"/>
<circle cx="579.0" cy="641.0" r="0.9"/>
<circle cx="485.5" cy="649.5" r="0.6"/>
<circle cx="494.0" cy="649.5" r="0.8"/>
<circle cx="502.5" cy="649.5" r="0.9"/>
<circle cx="511.0" cy="649.5" r="0.9"/>
<circle cx="519.5" cy="649.5" r="0.9"/>
<circle cx="528.0" cy="649.5" r="1.1"/>
<circle cx="536.5" cy="649.5" r="2.4"/>
<circle cx="545.0" cy="649.5" r="3.1"/>
<circle cx="553.5" cy="649.5" r="3.2"/>
<circle cx="562.0" cy="649.5" r="3.1"/>
<circle cx="570.5" cy="649.5" r="2.4"/>
<circle cx="579.0" cy="649.5" r="1.1"/>
<circle cx="485.5" cy="658.0" r="0.5"/>
<circle cx="494.0" cy="658.0" r="0.7"/>
<circle cx="502.5" cy="658.0" r="0.9"/>
<circle cx="511.0" cy="658.0" r="0.9"/>
<circle cx="519.5" cy="658.0" r="0.9"/>
<circle cx="528.0" cy="658.0" r="1.1"/>
<circle cx="536.5" cy="658.0" r="2.4"/>
<circle cx="545.0" cy="658.0" r="3.1"/>
<circle cx="553.5" cy="658.0" r="3.2"/>
<circle cx="562.0" cy="658.0" r="3.1"/>
<circle cx="570.5" cy="658.0" r="2.4"/>
<circle cx="485.5" cy="666.5" r="0.5"/>
<circle cx="494.0" cy="666.5" r="0.7"/>
<circle cx="502.5" cy="666.5" r="0.8"/>
<circle cx="511.0" cy="666.5" r="0.9"/>
<circle cx="519.5" cy="666.5" r="0.9"/>
<circle cx="528.0" cy="666.5" r="1.0"/>
<circle cx="536.5" cy="666.5" r="2.2"/>
<circle cx="545.0" cy="666.5" r="3.0"/>
<circle cx="553.5" cy="666.5" r="3.2"/>
<circle cx="562.0" cy="666.5" r="3.0"/>
<circle cx="570.5" cy="666.5" r="2.2"/>
<circle cx="494.0" cy="675.0" r="0.6"/>
<circle cx="502.5" cy="675.0" r="0.8"/>
<circle cx="511.0" cy="675.0" r="0.9"/>
<circle cx="519.5" cy="675.0" r="0.9"/>
<circle cx="528.0" cy="675.0" r="0.9"/>
<circle cx="536.5" cy="675.0" r="1.9"/>
<circle cx="545.0" cy="675.0" r="2.8"/>
<circle cx="553.5" cy="675.0" r="3.0"/>
<circle cx="562.0" cy="675.0" r="2.8"/>
<circle cx="570.5" cy="675.0" r="1.9"/>
<circle cx="494.0" cy="683.5" r="0.6"/>
<circle cx="502.5" cy="683.5" r="0.7"/>
<circle cx="511.0" cy="683.5" r="0.8"/>
<circle cx="519.5" cy="683.5" r="0.9"/>
<circle cx="528.0" cy="683.5" r="0.9"/>
<circle cx="536.5" cy="683.5" r="1.5"/>
<circle cx="545.0" cy="683.5" r="2.3"/>
<circle cx="553.5" cy="683.5" r="2.6"/>
<circle cx="562.0" cy="683.5" r="2.3"/>
<circle cx="570.5" cy="683.5" r="1.5"/>
<circle cx="502.5" cy="692.0" r="0.6"/>
<circle cx="511.0" cy="692.0" r="0.8"/>
<circle cx="519.5" cy="692.0" r="0.9"/>
<circle cx="528.0" cy="692.0" r="0.9"/>
<circle cx="536.5" cy="692.0" r="1.0"/>
<circle cx="545.0" cy="692.0" r="1.7"/>
<circle cx="553.5" cy="692.0" r="1.9"/>
<circle cx="562.0" cy="692.0" r="1.7"/>
<circle cx="502.5" cy="700.5" r="0.5"/>
<circle cx="511.0" cy="700.5" r="0.7"/>
<circle cx="519.5" cy="700.5" r="0.8"/>
<circle cx="528.0" cy="700.5" r="0.8"/>
<circle cx="536.5" cy="700.5" r="0.9"/>
<circle cx="545.0" cy="700.5" r="1.2"/>
<circle cx="553.5" cy="700.5" r="2.0"/>
<circle cx="562.0" cy="700.5" r="1.8"/>
<circle cx="511.0" cy="709.0" r="0.5"/>
<circle cx="519.5" cy="709.0" r="0.6"/>
<circle cx="528.0" cy="709.0" r="0.7"/>
<circle cx="536.5" cy="709.0" r="0.7"/>
<circle cx="545.0" cy="709.0" r="1.2"/>
<circle cx="553.5" cy="709.0" r="2.0"/>
<circle cx="562.0" cy="709.0" r="1.9"/>
<circle cx="528.0" cy="717.5" r="0.5"/>
<circle cx="536.5" cy="717.5" r="0.6"/>
<circle cx="545.0" cy="717.5" r="1.0"/>
<circle cx="553.5" cy="717.5" r="1.8"/>
<circle cx="562.0" cy="717.5" r="1.6"/>
<circle cx="545.0" cy="726.0" r="0.6"/>
<circle cx="553.5" cy="726.0" r="1.4"/>
<circle cx="562.0" cy="726.0" r="1.2"/>
<circle cx="553.5" cy="734.5" r="0.7"/>
<circle cx="562.0" cy="734.5" r="0.6"/>
<circle cx="409.0" cy="598.5" r="0.5"/>
<circle cx="417.5" cy="598.5" r="0.6"/>
<circle cx="409.0" cy="607.0" r="0.8"/>
<circle cx="417.5" cy="607.0" r="1.0"/>
<circle cx="409.0" cy="615.5" r="1.2"/>
<circle cx="417.5" cy="615.5" r="1.4"/>
<circle cx="409.0" cy="624.0" r="1.5"/>
<circle cx="417.5" cy="624.0" r="1.7"/>
<circle cx="417.5" cy="632.5" r="2.0"/>
<circle cx="417.5" cy="641.0" r="2.1"/>
</g>
<g fill="#2b0726">
<circle cx="309.0" cy="560.0" r="1.0"/>
<circle cx="309.0" cy="566.3" r="1.3"/>
<circle cx="309.0" cy="572.6" r="1.5"/>
<circle cx="309.0" cy="578.9" r="1.1"/>
<circle cx="309.0" cy="585.2" r="1.1"/>
<circle cx="309.0" cy="591.5" r="1.5"/>
<circle cx="309.0" cy="597.8" r="1.3"/>
<circle cx="309.0" cy="604.1" r="1.0"/>
<circle cx="309.0" cy="610.4" r="1.3"/>
<circle cx="309.0" cy="616.7" r="1.5"/>
<circle cx="309.0" cy="623.0" r="1.1"/>
<circle cx="309.0" cy="629.3" r="1.1"/>
<circle cx="309.0" cy="635.6" r="1.5"/>
<circle cx="309.0" cy="641.9" r="1.3"/>
<circle cx="309.0" cy="648.2" r="1.0"/>
<circle cx="309.0" cy="654.5" r="1.3"/>
<circle cx="309.0" cy="660.8" r="1.5"/>
<circle cx="309.0" cy="667.1" r="1.1"/>
<circle cx="309.0" cy="673.4" r="1.1"/>
<circle cx="309.0" cy="679.7" r="1.5"/>
<circle cx="309.0" cy="686.0" r="1.3"/>
<circle cx="309.0" cy="692.3" r="1.0"/>
<circle cx="309.0" cy="698.6" r="1.3"/>
<circle cx="309.0" cy="704.9" r="1.5"/>
<circle cx="309.0" cy="711.2" r="1.1"/>
<circle cx="309.0" cy="717.5" r="1.1"/>
<circle cx="309.0" cy="723.8" r="1.5"/>
<circle cx="309.0" cy="730.1" r="1.3"/>
<circle cx="584.6" cy="655.0" r="1.7"/>
<circle cx="585.8" cy="663.5" r="1.7"/>
<circle cx="586.9" cy="672.0" r="1.7"/>
<circle cx="587.8" cy="680.5" r="1.7"/>
<circle cx="588.7" cy="689.0" r="1.7"/>
<circle cx="589.5" cy="697.5" r="1.7"/>
<circle cx="590.2" cy="706.0" r="1.7"/>
<circle cx="590.7" cy="714.5" r="1.7"/>
<circle cx="591.2" cy="723.0" r="1.7"/>
<circle cx="591.6" cy="731.5" r="1.7"/>
<circle cx="591.8" cy="740.0" r="1.7"/>
<circle cx="592.0" cy="748.5" r="1.7"/>
<circle cx="592.0" cy="757.0" r="1.7"/>
</g>
<g fill="none" stroke="#120a06" stroke-linecap="round">
<path d="M376 538 C375.5 555 374.5 570 373.5 582" stroke-width="1.1"/>
<path d="M373.5 582 C367 600 362 640 361 700 L361 756" stroke-width="0.6" stroke="#3a2018"/>
<path d="M322 470 C316 484 313 500 312 520" stroke-width="0.7" stroke="#3a2018"/>
<path d="M581 648 C576 668 568 710 562 756" stroke-width="1"/>
<path d="M402 600 C408 612 414 610 416 622 C418 640 428 640 432 652 C436 670 446 672 452 690 C456 710 462 722 466 738" stroke-width="0.9"/>
<path d="M420 600 C450 625 500 628 530 606" stroke-width="1.4"/>
<path d="M436 646 C444 650 452 649 458 646" stroke-width="1.8"/>
<path d="M438 678 C446 684 456 683 462 679" stroke-width="1.8"/>
<path d="M446 703 C456 716 470 722 484 733" stroke-width="1.6"/>
<path d="M458 722 C466 738 474 742 484 748" stroke-width="1.4"/>
<path d="M510 520 C520 530 530 545 538 568" stroke-width="1.5"/>
<path d="M447 452 C452 460 458 466 465 470" stroke-width="1.6"/>
<path d="M421 454 C428 462 436 470 444 480" stroke-width="0.8" stroke="#6a5a50"/>
<path d="M450 404 C452 412 453 420 453 428" stroke-width="1.2" stroke="#5a4030"/>
<path d="M312 320 C308 360 312 420 322 462" stroke-width="1"/>
<path d="M322 305 C314 350 318 410 334 452" stroke-width="0.9"/>
<path d="M352 392 C372 408 400 412 420 412" stroke-width="1.2"/>
<path d="M346 402 C366 424 396 430 424 428" stroke-width="1.1"/>
<path d="M360 438 C380 446 404 446 422 440" stroke-width="1"/>
<path d="M447 330 C460 360 468 400 474 430" stroke-width="0.9"/>
<path d="M478 440 C495 458 520 470 548 492" stroke-width="1"/>
</g>
<g>
<path d="M376.5 308 C381 299.5 394 296.5 404.5 301.5 C399 300 386 301.5 378.5 310Z" fill="#0d0705" stroke="#0d0705" stroke-width="1.2" stroke-linejoin="round"/>
<path d="M340.5 351.5 C338 340 342.5 331 352 328.5 C348 333 343.5 340 343 351Z" fill="#0d0705" stroke="#0d0705" stroke-width="1.1" stroke-linejoin="round"/>
<path d="M387 323.5 C391 315 400 311 408 312.5 C405 320 395 326 387 323.500Z" fill="#f4efe8" stroke="#0d0705" stroke-width="1.5"/>
<ellipse cx="397.5" cy="318" rx="4.6" ry="3.6" transform="rotate(-28 397.5 318)" fill="#2a160c"/><circle cx="398.5" cy="317" r="1" fill="#fff"/>
<path d="M386 324 C390 314.5 400 310.5 409 312" fill="none" stroke="#0d0705" stroke-width="2"/>
<path d="M352 358 C355 348 362 342 369.5 341.5 C368 350 361 357 352 358Z" fill="#f4efe8" stroke="#0d0705" stroke-width="1.5"/>
<ellipse cx="361" cy="349.5" rx="4.4" ry="3.6" transform="rotate(-45 361 349.5)" fill="#2c302e"/><circle cx="361.5" cy="348.5" r="1" fill="#fff"/>
<path d="M351.5 358.5 C354 347.5 362 341.5 370 341" fill="none" stroke="#0d0705" stroke-width="2"/>
<path d="M386 312 C392 308 398 307 403 308" fill="none" stroke="#7a5a48" stroke-width="0.8"/>
<path d="M349 346 C352 340 357 337 362 336" fill="none" stroke="#7a5a48" stroke-width="0.8"/>
<ellipse cx="384" cy="345" rx="2.2" ry="2.8" fill="#1a0f0a"/>
<ellipse cx="395" cy="337" rx="2.4" ry="2" fill="#1a0f0a"/>
<path d="M376 350 C378 354 382 355 386 352" fill="none" stroke="#4a3020" stroke-width="0.8"/>
<path d="M389 358 C393 350 404 348 417 351 C414 361 404 370 391 373 C389 368 388 363 389 358Z" fill="#ea8082" stroke="#5a2020" stroke-width="0.8"/>
<path d="M393 366 C396 358 404 355 412 355 C409 361 402 366 393 369Z" fill="#fff"/>
<g fill="#e3a783">
<circle cx="383.0" cy="318.0" r="1.1"/>
<circle cx="377.0" cy="324.0" r="0.9"/>
<circle cx="368.0" cy="332.0" r="0.9"/>
<circle cx="372.0" cy="342.0" r="1.0"/>
<circle cx="349.0" cy="362.0" r="1.3"/>
<circle cx="345.0" cy="352.0" r="1.1"/>
<circle cx="396.0" cy="330.0" r="0.9"/>
<circle cx="417.0" cy="318.0" r="0.8"/>
</g>
</g>
<rect x="76" y="715" width="520" height="6" fill="url(#bansh)"/>
<rect x="76" y="686.5" width="590" height="28.5" fill="url(#ban)"/>
<ellipse cx="192" cy="700" rx="88" ry="11" fill="#fff" opacity="0.16" filter="url(#glow2)"/>
<g fill="#6a3a62" opacity="0.85"><path d="M174 688 C177 692 177 696 175 699 C172 696 172 692 174 688Z"/><path d="M179 697 C183 694 187 694 190 695 C187 699 183 700 179 699Z"/><path d="M178 703 C182 704 184 707 185 710 C181 709 178 707 178 703Z"/></g>
<text x="113" y="708" font-family="'Liberation Serif','DejaVu Serif',serif" font-style="italic" font-size="24" lengthAdjust="spacingAndGlyphs" textLength="56" fill="#fff" opacity="0.7" filter="url(#glow)">Pop</text>
<text x="113" y="708" font-family="'Liberation Serif','DejaVu Serif',serif" font-style="italic" font-size="24" lengthAdjust="spacingAndGlyphs" textLength="56" fill="#fff">Pop</text>
<text x="190" y="708" font-family="'Liberation Serif','DejaVu Serif',serif" font-style="italic" font-size="24" lengthAdjust="spacingAndGlyphs" textLength="78" fill="#fff" opacity="0.7" filter="url(#glow)">Art</text>
<text x="190" y="708" font-family="'Liberation Serif','DejaVu Serif',serif" font-style="italic" font-size="24" lengthAdjust="spacingAndGlyphs" textLength="78" fill="#fff">Art</text>
</g>
</svg>
<div id="rdock" class="abs"></div>
<div id="rhead" class="abs"></div>
<svg class="abs" style="left:900px;top:98px" width="8" height="8"><path d="M3.5 0.5 L0.5 3.5 L3.5 6.5z M7.5 0.5 L4.5 3.5 L7.5 6.5z" fill="#d0d0d0"/></svg>
<svg class="abs" style="left:1136px;top:98px" width="8" height="8"><path d="M0.5 0.5 L3.5 3.5 L0.5 6.5z M4.5 0.5 L7.5 3.5 L4.5 6.5z" fill="#d0d0d0"/></svg>
<!-- icon column -->
<div class="panel" style="left:876px;top:108px;width:35px;height:74px;"></div>
<div class="panel" style="left:876px;top:184px;width:35px;height:71px;"></div>
<div class="abs" style="left:880px;top:113px;width:27px;height:3px;background:repeating-linear-gradient(90deg,#9c9c9c 0 1px,transparent 1px 2px);"></div>
<div class="abs" style="left:880px;top:189px;width:27px;height:3px;background:repeating-linear-gradient(90deg,#9c9c9c 0 1px,transparent 1px 2px);"></div>
<!-- brushes cup icon -->
<svg class="abs" style="left:884px;top:124px" width="20" height="22" viewBox="0 0 20 22">
 <path d="M4 2 L6 9 M10 1 L10 9 M16 2 L13 9" stroke="#222" stroke-width="1.6" fill="none"/>
 <circle cx="4" cy="2.5" r="1.8" fill="#222"/><circle cx="10" cy="2" r="1.8" fill="#222"/><circle cx="16" cy="2.5" r="1.8" fill="#222"/>
 <path d="M4.5 9.5 H15.5 L14.5 19.5 H5.5Z" fill="#f0f0f0" stroke="#222" stroke-width="1.4"/>
 <path d="M6 12 H14" stroke="#222" stroke-width="1.5"/>
</svg>
<!-- clone source icon -->
<svg class="abs" style="left:883px;top:155px" width="20" height="20" viewBox="0 0 20 20">
 <path d="M1 2 h3 M1 5 h3 M1 8 h3 M6 2 h3 M6 5 h3" stroke="#333" stroke-width="1.5"/>
 <circle cx="12.5" cy="4.5" r="3" fill="#555" stroke="#222"/>
 <path d="M11 7 V10 H6 V13 H19 V10 H14 V7" fill="#888" stroke="#222"/>
 <rect x="5" y="14.5" width="15" height="4" fill="#fff" stroke="#222"/>
 <path d="M8 15 L12.5 18 L17 15z" fill="#222"/>
</svg>
<div class="abs" style="left:886px;top:196px;font:17px/22px 'Liberation Sans',sans-serif;color:#333;">A</div>
<div class="abs" style="left:899px;top:201px;width:1px;height:16px;background:#222"></div>
<div class="abs" style="left:887px;top:227px;font:bold 17px/22px 'Liberation Sans',sans-serif;color:#555;">¶</div>

<!-- ===== COLOR panel ===== -->
<div class="panel" style="left:912px;top:108px;width:236px;height:116px;"></div>
<div class="ptabs" style="left:912px;top:108px;width:236px;"></div>
<div class="ptab act" style="left:912px;top:108px;width:50px;">COLOR</div>
<div class="ptab" style="left:962px;top:108px;width:72px;">SWATCHES</div>
<div class="ptab" style="left:1034px;top:108px;width:51px;">STYLES</div>
<svg class="abs" style="left:1130px;top:113px" width="14" height="8"><path d="M0 1 h5 l-2.5 3z" fill="#333"/><path d="M6 1 h8 M6 3.5 h8 M6 6 h8" stroke="#333" stroke-width="1"/></svg>
<div class="abs" style="left:932px;top:147px;width:20px;height:20px;box-sizing:border-box;background:#3f0a36;border:1px solid #c9c3c8;box-shadow:inset 0 0 0 1px #f0d4e6;"></div>
<div class="abs" style="left:920px;top:135px;width:20px;height:20px;box-sizing:border-box;background:#6b345c;border:1px solid #000;box-shadow:inset 0 0 0 1px #f4dcec;"></div>
<div class="lbl" style="left:956px;top:133px;font-size:10px">R</div>
<div class="lbl" style="left:956px;top:156px;font-size:10px">G</div>
<div class="lbl" style="left:956px;top:179px;font-size:10px">B</div>
<div class="abs" style="left:970px;top:137px;width:100px;height:5px;background:linear-gradient(90deg,#00345c,#ff345c);box-shadow:0 0 0 1px #888 inset;"></div>
<div class="abs" style="left:970px;top:160px;width:100px;height:5px;background:linear-gradient(90deg,#6b005c,#6bff5c);box-shadow:0 0 0 1px #888 inset;"></div>
<div class="abs" style="left:970px;top:183px;width:100px;height:5px;background:linear-gradient(90deg,#6b3400,#6b34ff);box-shadow:0 0 0 1px #888 inset;"></div>
<svg class="abs" style="left:1006px;top:143px" width="10" height="8"><path d="M5 0.8 L9.2 6.5 H0.8Z" fill="#f4fff4" stroke="#2d6a2d" stroke-width="1"/></svg>
<svg class="abs" style="left:984px;top:166px" width="10" height="8"><path d="M5 0.8 L9.2 6.5 H0.8Z" fill="#f4fff4" stroke="#2d6a2d" stroke-width="1"/></svg>
<svg class="abs" style="left:1001px;top:189px" width="10" height="8"><path d="M5 0.8 L9.2 6.5 H0.8Z" fill="#f4fff4" stroke="#2d6a2d" stroke-width="1"/></svg>
<div class="field" style="left:1075px;top:132px;width:32px;height:19px;border-color:#bdbdbd"></div>
<div class="field" style="left:1075px;top:155px;width:32px;height:19px;border-color:#bdbdbd"></div>
<div class="field" style="left:1075px;top:178px;width:32px;height:19px;border-color:#bdbdbd"></div>
<div class="lbl" style="left:1081px;top:135px;font-size:10px">107</div>
<div class="lbl" style="left:1081px;top:158px;font-size:10px">52</div>
<div class="lbl" style="left:1081px;top:181px;font-size:10px">92</div>
<div class="abs" style="left:918px;top:205px;width:190px;height:15px;background:linear-gradient(180deg,rgba(255,255,255,.85) 0%,rgba(255,255,255,0) 45%,rgba(0,0,0,0) 55%,rgba(0,0,0,.95) 100%),linear-gradient(90deg,#f00 0%,#ff0 17%,#0f0 33%,#0ff 50%,#00f 67%,#f0f 84%,#f00 100%);"></div>
<div class="abs" style="left:1108px;top:205px;width:8px;height:8px;background:#fff"></div>
<div class="abs" style="left:1108px;top:213px;width:8px;height:7px;background:#000"></div>

<!-- ===== ADJUSTMENTS panel ===== -->
<div class="panel" style="left:912px;top:227px;width:236px;height:356px;"></div>
<div class="ptabs" style="left:912px;top:227px;width:236px;"></div>
<div class="ptab act" style="left:912px;top:227px;width:90px;">ADJUSTMENTS</div>
<div class="ptab" style="left:1002px;top:227px;width:49px;">MASKS</div>
<svg class="abs" style="left:1130px;top:232px" width="14" height="8"><path d="M0 1 h5 l-2.5 3z" fill="#333"/><path d="M6 1 h8 M6 3.5 h8 M6 6 h8" stroke="#333" stroke-width="1"/></svg>
<div class="lbl" style="left:918px;top:249px;font-weight:bold;font-size:10px;letter-spacing:-0.3px">Add an adjustment</div>
<div class="abs" style="left:915px;top:273px;width:209px;height:1px;background:#8f8f8f"></div>
<div class="abs" style="left:959px;top:313px;width:120px;height:1px;background:#8f8f8f"></div>
<div class="abs" style="left:959px;top:353px;width:120px;height:1px;background:#8f8f8f"></div>
<svg class="abs" style="left:963px;top:284px" width="24" height="20" viewBox="0 0 24 20"><rect width="24" height="20" fill="#fbfbfb"/><circle cx="12" cy="10" r="4" fill="#fff" stroke="#222" stroke-width="1.2"/><path d="M12 6 A4 4 0 0 0 12 14Z" fill="#222"/><g stroke="#222" stroke-width="1.3"><path d="M12 1.5 V4 M12 16 V18.5 M3.5 10 H6 M18 10 H20.5 M6 4 L7.8 5.8 M16.2 14.2 L18 16 M6 16 L7.8 14.2 M16.2 5.8 L18 4"/></g></svg><svg class="abs" style="left:992px;top:284px" width="24" height="20" viewBox="0 0 24 20"><rect width="24" height="20" fill="#fbfbfb"/><path d="M3 15 L4 10 L5 12 L6.5 6 L8 11 L9 8 L10.5 3 L12 9 L13 5 L14.5 10 L16 4 L17 9 L18.5 7 L20 12 L21 15Z" fill="#444"/><path d="M3 18.5 l1.5 -2 l1.5 2z M10.5 18.5 l1.5 -2 l1.5 2z M18 18.5 l1.5 -2 l1.5 2z" fill="#555"/></svg><svg class="abs" style="left:1021px;top:284px" width="24" height="20" viewBox="0 0 24 20"><rect width="24" height="20" fill="#fbfbfb"/><g stroke="#888" stroke-width=".8"><path d="M4 2 V18 M8 2 V18 M12 2 V18 M16 2 V18 M20 2 V18 M4 2 H20 M4 6 H20 M4 10 H20 M4 14 H20 M4 18 H20"/></g><path d="M4 17 C12 17 11 4 20 3" fill="none" stroke="#111" stroke-width="1.6"/></svg><svg class="abs" style="left:1050px;top:284px" width="24" height="20" viewBox="0 0 24 20"><rect width="24" height="20" fill="#fbfbfb"/><rect x="2.5" y="2.5" width="19" height="15" fill="#fff" stroke="#333"/><path d="M21.5 2.5 V17.5 H2.5Z" fill="#222"/><path d="M5 5.5 h4 M7 3.5 v4" stroke="#222" stroke-width="1.4"/><path d="M15 14 h4" stroke="#fff" stroke-width="1.4"/></svg><svg class="abs" style="left:934px;top:324px" width="24" height="20" viewBox="0 0 24 20"><rect width="24" height="20" fill="#fbfbfb"/><defs><linearGradient id="gv" x1="0" x2="1"><stop offset="0" stop-color="#ddd"/><stop offset="1" stop-color="#666"/></linearGradient></defs><path d="M5 3 H19 L12 18Z" fill="url(#gv)" stroke="#999" stroke-width=".6"/></svg><svg class="abs" style="left:963px;top:324px" width="24" height="20" viewBox="0 0 24 20"><rect width="24" height="20" fill="#fbfbfb"/><defs><linearGradient id="gh" x1="0" x2="1"><stop offset="0" stop-color="#333"/><stop offset=".5" stop-color="#bbb"/><stop offset="1" stop-color="#333"/></linearGradient><linearGradient id="gh2" x1="0" x2="1"><stop offset="0" stop-color="#222"/><stop offset="1" stop-color="#eee"/></linearGradient></defs><rect x="2" y="2" width="20" height="5" fill="url(#gh)"/><rect x="2" y="8" width="20" height="4" fill="#333"/><rect x="2" y="13.5" width="20" height="5" fill="url(#gh2)"/></svg><svg class="abs" style="left:992px;top:324px" width="24" height="20" viewBox="0 0 24 20"><rect width="24" height="20" fill="#fbfbfb"/><path d="M12 2 V15 M5 6.5 H19" stroke="#222" stroke-width="1.5"/><path d="M9 3 h6 l-3 3z" fill="#222"/><path d="M5 6.5 L2 14 H8Z M19 6.5 L16 14 H22Z" fill="none" stroke="#222" stroke-width="1"/><path d="M2 14 A3 2.5 0 0 0 8 14Z M16 14 A3 2.5 0 0 0 22 14Z" fill="#222"/><path d="M8 17.5 H16" stroke="#222" stroke-width="2"/></svg><svg class="abs" style="left:1021px;top:324px" width="24" height="20" viewBox="0 0 24 20"><rect width="24" height="20" fill="#fbfbfb"/><rect x="2.5" y="2.5" width="19" height="15" fill="#fff" stroke="#333"/><path d="M2.5 2.5 H21.5 L2.5 17.5Z" fill="#222"/></svg><svg class="abs" style="left:1050px;top:324px" width="24" height="20" viewBox="0 0 24 20"><rect width="24" height="20" fill="#fbfbfb"/><circle cx="8" cy="8" r="6" fill="#999" stroke="#555"/><rect x="8.5" y="9.500" width="13" height="9" rx="1" fill="#666" stroke="#333"/><circle cx="15" cy="14" r="3" fill="#222" stroke="#aaa" stroke-width=".7"/></svg><svg class="abs" style="left:1079px;top:324px" width="24" height="20" viewBox="0 0 24 20"><rect width="24" height="20" fill="#fbfbfb"/><circle cx="9" cy="8" r="5.5" fill="#aaa" opacity=".9"/><circle cx="15" cy="9" r="5.5" fill="#555" opacity=".9"/><circle cx="11" cy="13" r="5.500" fill="#ddd" opacity=".85" stroke="#999" stroke-width=".5"/></svg><svg class="abs" style="left:949px;top:364px" width="24" height="20" viewBox="0 0 24 20"><rect width="24" height="20" fill="#fbfbfb"/><rect x="2.5" y="2.5" width="10" height="8" fill="#fff" stroke="#222"/><rect x="4.5" y="4.5" width="4" height="2.5" fill="#444"/><path d="M8 8 l2 -2.5 l2 2.5z" fill="#444"/><rect x="11.5" y="9.500" width="10" height="8" fill="#222" stroke="#222"/><rect x="13.5" y="13" width="4" height="2.500" fill="#eee"/><path d="M16 13 l2 -2.5 l2 2.500z" fill="#eee"/></svg><svg class="abs" style="left:978px;top:364px" width="24" height="20" viewBox="0 0 24 20"><rect width="24" height="20" fill="#fbfbfb"/><defs><linearGradient id="gp" x1="0" y1="0" x2="1" y2="1"><stop offset="0" stop-color="#555"/><stop offset=".3" stop-color="#999"/><stop offset=".45" stop-color="#666"/><stop offset=".6" stop-color="#bbb"/><stop offset=".75" stop-color="#777"/><stop offset="1" stop-color="#444"/></linearGradient></defs><rect x="1.5" y="1.5" width="21" height="17" fill="url(#gp)"/></svg><svg class="abs" style="left:1007px;top:364px" width="24" height="20" viewBox="0 0 24 20"><rect width="24" height="20" fill="#fbfbfb"/><rect x="1.5" y="1.5" width="21" height="17" fill="#333"/><path d="M10 18.500 L18 1.5 H22.5 L14.5 18.5Z" fill="#fff"/><path d="M1.500 18.5 L8 4 L1.5 1.5" fill="#555"/></svg><svg class="abs" style="left:1036px;top:364px" width="24" height="20" viewBox="0 0 24 20"><rect width="24" height="20" fill="#fbfbfb"/><defs><linearGradient id="gg" x1="0" x2="1"><stop offset="0" stop-color="#f4f4f4"/><stop offset="1" stop-color="#222"/></linearGradient></defs><rect x="1.5" y="1.5" width="21" height="17" fill="url(#gg)"/></svg><svg class="abs" style="left:1065px;top:364px" width="24" height="20" viewBox="0 0 24 20"><rect width="24" height="20" fill="#fbfbfb"/><rect x="1.500" y="1.5" width="21" height="17" fill="#eee"/><path d="M1.5 1.5 L12 10 L1.5 18.5Z" fill="#bbb"/><path d="M22.500 1.5 L12 10 L22.5 18.5Z" fill="#999"/><path d="M1.5 18.5 L12 10 L22.5 18.5Z" fill="#333"/></svg>
<!-- presets list -->
<div class="abs" style="left:925px;top:402px;width:173px;height:148px;box-sizing:border-box;border:1px solid #111;background:#d6d6d6;"></div>
<div class="abs" style="left:925px;top:423px;width:173px;height:1px;background:#111"></div>
<div class="abs" style="left:925px;top:444px;width:173px;height:1px;background:#111"></div>
<div class="abs" style="left:925px;top:465px;width:173px;height:1px;background:#111"></div>
<div class="abs" style="left:925px;top:486px;width:173px;height:1px;background:#111"></div>
<div class="abs" style="left:925px;top:507px;width:173px;height:1px;background:#111"></div>
<div class="abs" style="left:925px;top:528px;width:173px;height:1px;background:#111"></div>
<div class="lbl" style="left:944px;top:407px">Levels Presets</div>
<div class="lbl" style="left:944px;top:428px">Curves Presets</div>
<div class="lbl" style="left:944px;top:449px">Exposure Presets</div>
<div class="lbl" style="left:944px;top:470px">Hue/Saturation Presets</div>
<div class="lbl" style="left:944px;top:491px">Black &amp; White Presets</div>
<div class="lbl" style="left:944px;top:512px">Channel Mixer Presets</div>
<div class="lbl" style="left:944px;top:533px">Selective Color Presets</div>
<svg class="abs" style="left:929px;top:407px" width="10" height="140"><g fill="#8a8a8a"><path d="M1 0.5 L9 4.5 L1 8.5z"/><path d="M1 21.5 L9 25.5 L1 29.5z"/><path d="M1 42.5 L9 46.5 L1 50.5z"/><path d="M1 63.5 L9 67.5 L1 71.5z"/><path d="M1 84.5 L9 88.5 L1 92.5z"/><path d="M1 105.5 L9 109.5 L1 113.5z"/><path d="M1 126.5 L9 130.5 L1 134.5z"/></g></svg>
<div class="abs" style="left:1098px;top:402px;width:15px;height:148px;background:#f4f7fd;"></div>
<div class="xpbtn" style="left:1099px;top:403px;width:13px;height:15px;border-color:#c4d0ea;background:linear-gradient(90deg,#e6edfb,#c9d6f3)"></div>
<svg class="abs" style="left:1101px;top:407px" width="9" height="7"><path d="M1 5 L4.5 1.5 L8 5" fill="none" stroke="#9fb2dc" stroke-width="2"/></svg>
<div class="xpbtn" style="left:1099px;top:534px;width:13px;height:15px;border-color:#c4d0ea;background:linear-gradient(90deg,#e6edfb,#c9d6f3)"></div>
<svg class="abs" style="left:1101px;top:538px" width="9" height="7"><path d="M1 1.5 L4.5 5 L8 1.5" fill="none" stroke="#9fb2dc" stroke-width="2"/></svg>
<div class="abs" style="left:915px;top:564px;width:209px;height:1px;background:#9a9a9a"></div>
<svg class="abs" style="left:946px;top:566px" width="17" height="14" viewBox="0 0 17 14"><rect x="0.5" y="0.5" width="10" height="8" fill="#f4f4f4" stroke="#222"/><path d="M2 2 L7 6 M2 2 H5 M2 2 V5" stroke="#222" fill="none"/><rect x="9.5" y="6.5" width="6" height="6" fill="#f4f4f4" stroke="#222"/></svg>
<svg class="abs" style="left:1099px;top:566px" width="21" height="14" viewBox="0 0 21 14"><circle cx="15.5" cy="7.5" r="4" fill="#333"/><circle cx="11.5" cy="7" r="5" fill="#333" stroke="#ddd" stroke-width=".6"/><circle cx="6.5" cy="6.5" r="6" fill="#3a3a3a" stroke="#ddd" stroke-width=".6"/></svg>

<!-- ===== LAYERS panel ===== -->
<div class="panel" style="left:912px;top:586px;width:236px;height:272px;"></div>
<div class="ptabs" style="left:912px;top:586px;width:236px;"></div>
<div class="ptab act" style="left:912px;top:586px;width:54px;">LAYERS</div>
<div class="ptab" style="left:966px;top:586px;width:68px;">CHANNELS</div>
<div class="ptab" style="left:1034px;top:586px;width:50px;">PATHS</div>
<svg class="abs" style="left:1130px;top:591px" width="14" height="8"><path d="M0 1 h5 l-2.5 3z" fill="#333"/><path d="M6 1 h8 M6 3.5 h8 M6 6 h8" stroke="#333" stroke-width="1"/></svg>
<div class="field" style="left:916px;top:606px;width:131px;height:18px;border-color:#b5b5b5"></div>
<div class="lbl" style="left:919px;top:609px">Normal</div>
<div class="xpbtn" style="left:1030px;top:607px;width:16px;height:16px"></div>
<svg class="abs" style="left:1033px;top:612px" width="10" height="7"><path d="M1 1 L5 5 L9 1" fill="none" stroke="#3b4f7a" stroke-width="2"/></svg>
<div class="lbl" style="left:1050px;top:608px">Opacity:</div>
<div class="field" style="left:1092px;top:606px;width:36px;height:18px;border-color:#b5b5b5"></div>
<div class="lbl" style="left:1097px;top:609px">33%</div>
<div class="xpbtn" style="left:1128px;top:606px;width:15px;height:18px"></div>
<svg class="abs" style="left:1132px;top:611px" width="7" height="9"><path d="M1 0.5 L5.5 4.5 L1 8.5z" fill="#3b4f7a"/></svg>
<div class="abs" style="left:915px;top:627px;width:230px;height:1px;background:#a8a8a8"></div>
<div class="lbl" style="left:919px;top:634px">Lock:</div>
<div class="abs" style="left:952px;top:634px;width:13px;height:13px;box-sizing:border-box;border:1px solid #444;background-color:#fff;background-image:linear-gradient(45deg,#c8c8c8 25%,transparent 25%,transparent 75%,#c8c8c8 75%),linear-gradient(45deg,#c8c8c8 25%,transparent 25%,transparent 75%,#c8c8c8 75%);background-size:6px 6px;background-position:0 0,3px 3px;"></div>
<svg class="abs" style="left:969px;top:633px" width="15" height="15"><path d="M13 1.5 C10 4 7 7 5.5 10" stroke="#333" stroke-width="1.6" fill="none"/><path d="M5.8 9.5 C4 10 3 12 1 13 C4 13.6 6.4 12.6 6.8 10.6Z" fill="#333"/></svg>
<svg class="abs" style="left:987px;top:633px" width="15" height="15"><path d="M7.5 1 V14 M1 7.5 H14" stroke="#222" stroke-width="1.3"/><path d="M7.5 0 L5 3 H10Z M7.5 15 L5 12 H10Z M0 7.5 L3 5 V10Z M15 7.5 L12 5 V10Z" fill="#222"/></svg>
<svg class="abs" style="left:1005px;top:633px" width="13" height="15"><path d="M3.5 7 V4.5 C3.5 1.5 9.5 1.5 9.5 4.5 V7" fill="none" stroke="#333" stroke-width="1.6"/><rect x="1.5" y="6.5" width="10" height="7" fill="#444" stroke="#222"/></svg>
<div class="lbl" style="left:1073px;top:634px">Fill:</div>
<div class="field" style="left:1092px;top:633px;width:36px;height:17px;border-color:#b5b5b5"></div>
<div class="lbl" style="left:1095px;top:635px">100%</div>
<div class="xpbtn" style="left:1128px;top:633px;width:15px;height:17px"></div>
<svg class="abs" style="left:1132px;top:637px" width="7" height="9"><path d="M1 0.5 L5.5 4.5 L1 8.5z" fill="#3b4f7a"/></svg>
<!-- layer list -->
<div class="abs" style="left:912px;top:653px;width:219px;height:184px;overflow:hidden;border-top:1px solid #8a8a8a;box-sizing:border-box;">
 <div class="abs" style="left:24px;top:0;width:1px;height:184px;background:#8a8a8a"></div>
 <div class="lbl" style="left:79px;top:-5px;">Drop Shadow</div>
 <div class="abs" style="left:77px;top:12px;width:142px;height:1px;background:#8a8a8a"></div>
 <div class="lbl" style="left:79px;top:14px;">Outer Glow</div>
 <div class="abs" style="left:25px;top:31px;width:194px;height:31px;background:#2f5aa6"></div>
 <div class="abs" style="left:208px;top:31px;width:11px;height:31px;background:linear-gradient(90deg,#4a6fb2,#8aa0c8)"></div>
 <div class="abs" style="left:26px;top:33px;width:36px;height:27px;box-sizing:border-box;border:1px solid #000;outline:1px solid #fff;outline-offset:-3px;background-color:#fff;background-image:linear-gradient(45deg,#d0d0d0 25%,transparent 25%,transparent 75%,#d0d0d0 75%),linear-gradient(45deg,#d0d0d0 25%,transparent 25%,transparent 75%,#d0d0d0 75%);background-size:8px 8px;background-position:0 0,4px 4px;"></div>
 <div class="lbl" style="left:67px;top:41px;color:#fff;font-weight:bold;letter-spacing:-0.3px">Shape 1</div>
 <div class="lbl" style="left:189px;top:39px;color:#1d3c78;font:italic bold 12px/14px 'Liberation Serif',serif;">fx</div>
 <svg class="abs" style="left:209px;top:44px" width="7" height="5"><path d="M0.5 4 L3.5 0.5 L6.5 4z" fill="#1d2f55"/></svg>
 <div class="lbl" style="left:61px;top:64px;">Effects</div>
 <div class="abs" style="left:57px;top:81px;width:162px;height:1px;background:#8a8a8a"></div>
 <div class="lbl" style="left:79px;top:83px;">Drop Shadow</div>
 <div class="abs" style="left:25px;top:100px;width:194px;height:1px;background:#8a8a8a"></div>
 <div class="abs" style="left:28px;top:104px;width:33px;height:24px;box-sizing:border-box;border:1px solid #000;background-color:#fff;background-image:linear-gradient(45deg,#d0d0d0 25%,transparent 25%,transparent 75%,#d0d0d0 75%),linear-gradient(45deg,#d0d0d0 25%,transparent 25%,transparent 75%,#d0d0d0 75%);background-size:8px 8px;background-position:0 0,4px 4px;"></div>
 <svg class="abs" style="left:36px;top:107px" width="14" height="18"><path d="M4 2 C6 1 8 2 7 5 C9 5 10 7 8 8 M6 9 L7 17 L8 12" fill="none" stroke="#111" stroke-width="1.2"/></svg>
 <div class="lbl" style="left:67px;top:110px;">Layer 1</div>
 <div class="abs" style="left:25px;top:131px;width:194px;height:1px;background:#8a8a8a"></div>
 <div class="abs" style="left:28px;top:135px;width:33px;height:24px;box-sizing:border-box;border:1px solid #000;background-color:#fff;background-image:linear-gradient(45deg,#d0d0d0 25%,transparent 25%,transparent 75%,#d0d0d0 75%),linear-gradient(45deg,#d0d0d0 25%,transparent 25%,transparent 75%,#d0d0d0 75%);background-size:8px 8px;background-position:0 0,4px 4px;"></div>
 <div class="lbl" style="left:67px;top:141px;">Outline</div>
 <div class="abs" style="left:25px;top:162px;width:194px;height:1px;background:#8a8a8a"></div>
 <div class="abs" style="left:28px;top:166px;width:33px;height:24px;box-sizing:border-box;border:1px solid #000;background:linear-gradient(135deg,#d8d8d8,#ececec);"></div>
 <div class="lbl" style="left:67px;top:172px;">Layer 9</div>
 <div class="abs" style="left:5px;top:166px;width:15px;height:18px;box-sizing:border-box;border:1px solid #aaa;border-bottom:none;"></div>
</div>
<div class="abs" style="left:917px;top:693px;width:15px;height:15px;box-sizing:border-box;border:1px solid #a8a8a8;border-right-color:#eee;border-bottom-color:#eee;"></div><svg class="abs" style="left:918px;top:696px" width="13" height="9" viewBox="0 0 13 9"><path d="M0.5 4.8 C3 0.8 10 0.8 12.5 4.8 C10 8.4 3 8.4 0.5 4.8Z" fill="#f6f6f6" stroke="#222" stroke-width="1"/><circle cx="6.5" cy="4.5" r="2.6" fill="#111"/><path d="M0.5 4.2 C3 0.6 10 0.6 12.5 4.2" fill="none" stroke="#111" stroke-width="1.6"/></svg><div class="abs" style="left:917px;top:763px;width:15px;height:15px;box-sizing:border-box;border:1px solid #a8a8a8;border-right-color:#eee;border-bottom-color:#eee;"></div><svg class="abs" style="left:918px;top:766px" width="13" height="9" viewBox="0 0 13 9"><path d="M0.5 4.8 C3 0.8 10 0.8 12.5 4.8 C10 8.4 3 8.4 0.5 4.8Z" fill="#f6f6f6" stroke="#222" stroke-width="1"/><circle cx="6.5" cy="4.5" r="2.6" fill="#111"/><path d="M0.5 4.2 C3 0.6 10 0.6 12.5 4.2" fill="none" stroke="#111" stroke-width="1.6"/></svg><div class="abs" style="left:917px;top:794px;width:15px;height:15px;box-sizing:border-box;border:1px solid #a8a8a8;border-right-color:#eee;border-bottom-color:#eee;"></div><svg class="abs" style="left:918px;top:797px" width="13" height="9" viewBox="0 0 13 9"><path d="M0.5 4.8 C3 0.8 10 0.8 12.5 4.8 C10 8.4 3 8.4 0.5 4.8Z" fill="#f6f6f6" stroke="#222" stroke-width="1"/><circle cx="6.5" cy="4.5" r="2.6" fill="#111"/><path d="M0.5 4.2 C3 0.6 10 0.6 12.5 4.2" fill="none" stroke="#111" stroke-width="1.6"/></svg><svg class="abs" style="left:974px;top:670px" width="13" height="9" viewBox="0 0 13 9"><path d="M0.5 4.8 C3 0.8 10 0.8 12.5 4.8 C10 8.4 3 8.4 0.5 4.8Z" fill="#f6f6f6" stroke="#222" stroke-width="1"/><circle cx="6.5" cy="4.5" r="2.6" fill="#111"/><path d="M0.5 4.2 C3 0.6 10 0.6 12.5 4.2" fill="none" stroke="#111" stroke-width="1.6"/></svg><svg class="abs" style="left:956px;top:720px" width="13" height="9" viewBox="0 0 13 9"><path d="M0.5 4.8 C3 0.8 10 0.8 12.5 4.8 C10 8.4 3 8.4 0.5 4.8Z" fill="#f6f6f6" stroke="#222" stroke-width="1"/><circle cx="6.5" cy="4.5" r="2.6" fill="#111"/><path d="M0.5 4.2 C3 0.6 10 0.6 12.5 4.2" fill="none" stroke="#111" stroke-width="1.6"/></svg><svg class="abs" style="left:974px;top:739px" width="13" height="9" viewBox="0 0 13 9"><path d="M0.5 4.8 C3 0.8 10 0.8 12.5 4.8 C10 8.4 3 8.4 0.5 4.8Z" fill="#f6f6f6" stroke="#222" stroke-width="1"/><circle cx="6.5" cy="4.5" r="2.6" fill="#111"/><path d="M0.5 4.2 C3 0.6 10 0.6 12.5 4.2" fill="none" stroke="#111" stroke-width="1.6"/></svg>
<!-- layers scrollbar -->
<div class="abs" style="left:1131px;top:653px;width:15px;height:184px;background:#f4f7fd;"></div>
<div class="xpbtn" style="left:1131px;top:654px;width:15px;height:16px;border-color:#8fa3cf;background:linear-gradient(90deg,#dfe8fb,#b9c9ef)"></div>
<svg class="abs" style="left:1134px;top:659px" width="9" height="7"><path d="M1 5 L4.5 1.5 L8 5" fill="none" stroke="#3b4f7a" stroke-width="2"/></svg>
<div class="xpbtn" style="left:1131px;top:702px;width:15px;height:41px;border-color:#8fa3cf;background:linear-gradient(90deg,#dfe8fb,#b9c9ef)"></div>
<div class="abs" style="left:1135px;top:718px;width:7px;height:8px;background:repeating-linear-gradient(180deg,#7f95c4 0 1px,#eef3ff 1px 2px);"></div>
<div class="xpbtn" style="left:1131px;top:821px;width:15px;height:16px;border-color:#8fa3cf;background:linear-gradient(90deg,#dfe8fb,#b9c9ef)"></div>
<svg class="abs" style="left:1134px;top:826px" width="9" height="7"><path d="M1 1.5 L4.5 5 L8 1.5" fill="none" stroke="#3b4f7a" stroke-width="2"/></svg>
<div class="abs" style="left:912px;top:837px;width:236px;height:1px;background:#8a8a8a"></div>
<!-- layers footer icons -->
<svg class="abs" style="left:946px;top:840px" width="19" height="11" viewBox="0 0 19 11"><rect x="1" y="2.5" width="9" height="5" rx="2.5" fill="none" stroke="#555" stroke-width="1.5"/><rect x="9" y="2.5" width="9" height="5" rx="2.5" fill="none" stroke="#555" stroke-width="1.5"/></svg>
<div class="abs" style="left:976px;top:836px;font:italic bold 15px/18px 'Liberation Serif',serif;color:#333;">fx</div>
<svg class="abs" style="left:990px;top:849px" width="5" height="4"><path d="M0 0.5 h4 l-2 2.5z" fill="#222"/></svg>
<svg class="abs" style="left:1003px;top:838px" width="15" height="15"><rect x="0.5" y="0.5" width="14" height="13" fill="#777" stroke="#222"/><circle cx="7.5" cy="7" r="4" fill="#fff"/></svg>
<svg class="abs" style="left:1031px;top:838px" width="18" height="16"><circle cx="7" cy="7" r="6" fill="#fff" stroke="#222" stroke-width="1.2"/><path d="M2.8 11.2 A6 6 0 0 1 11.2 2.8Z" fill="#222"/><path d="M12 12.5 h4 l-2 2.5z" fill="#222"/></svg>
<svg class="abs" style="left:1057px;top:839px" width="14" height="13"><path d="M0.5 11.5 V1.5 H5 L6.5 3 H12.5 V11.5Z" fill="#f2f2f2" stroke="#555"/><path d="M1 12 H13" stroke="#222" stroke-width="1.4"/></svg>
<svg class="abs" style="left:1085px;top:839px" width="13" height="13"><rect x="2.5" y="0.5" width="9" height="11" fill="#fafafa" stroke="#666"/><rect x="0.5" y="5.5" width="6" height="6" fill="#fafafa" stroke="#222"/><path d="M11.5 1 V12 H2" stroke="#222" stroke-width="1.4" fill="none"/></svg>
<svg class="abs" style="left:1112px;top:838px" width="12" height="15"><path d="M1.5 4.5 H10.5 L9.5 14 H2.5Z" fill="#eee" stroke="#222"/><path d="M0.5 3.5 H11.5 M4 1.5 H8" stroke="#222" stroke-width="1.4"/><path d="M4.3 6 V12.5 M6 6 V12.5 M7.7 6 V12.5" stroke="#222" stroke-width=".9"/></svg>
<div id="edgeL" class="abs"></div>
<div id="edgeR" class="abs"></div>
<div id="edgeT" class="abs"></div>
<div id="edgeB" class="abs"></div>
<div class="abs" style="left:1024px;top:861px;width:128px;height:3px;background:linear-gradient(180deg,#aab2b8 0 1px,#5f7a80 1px 3px)"></div>
</body>
</html>
